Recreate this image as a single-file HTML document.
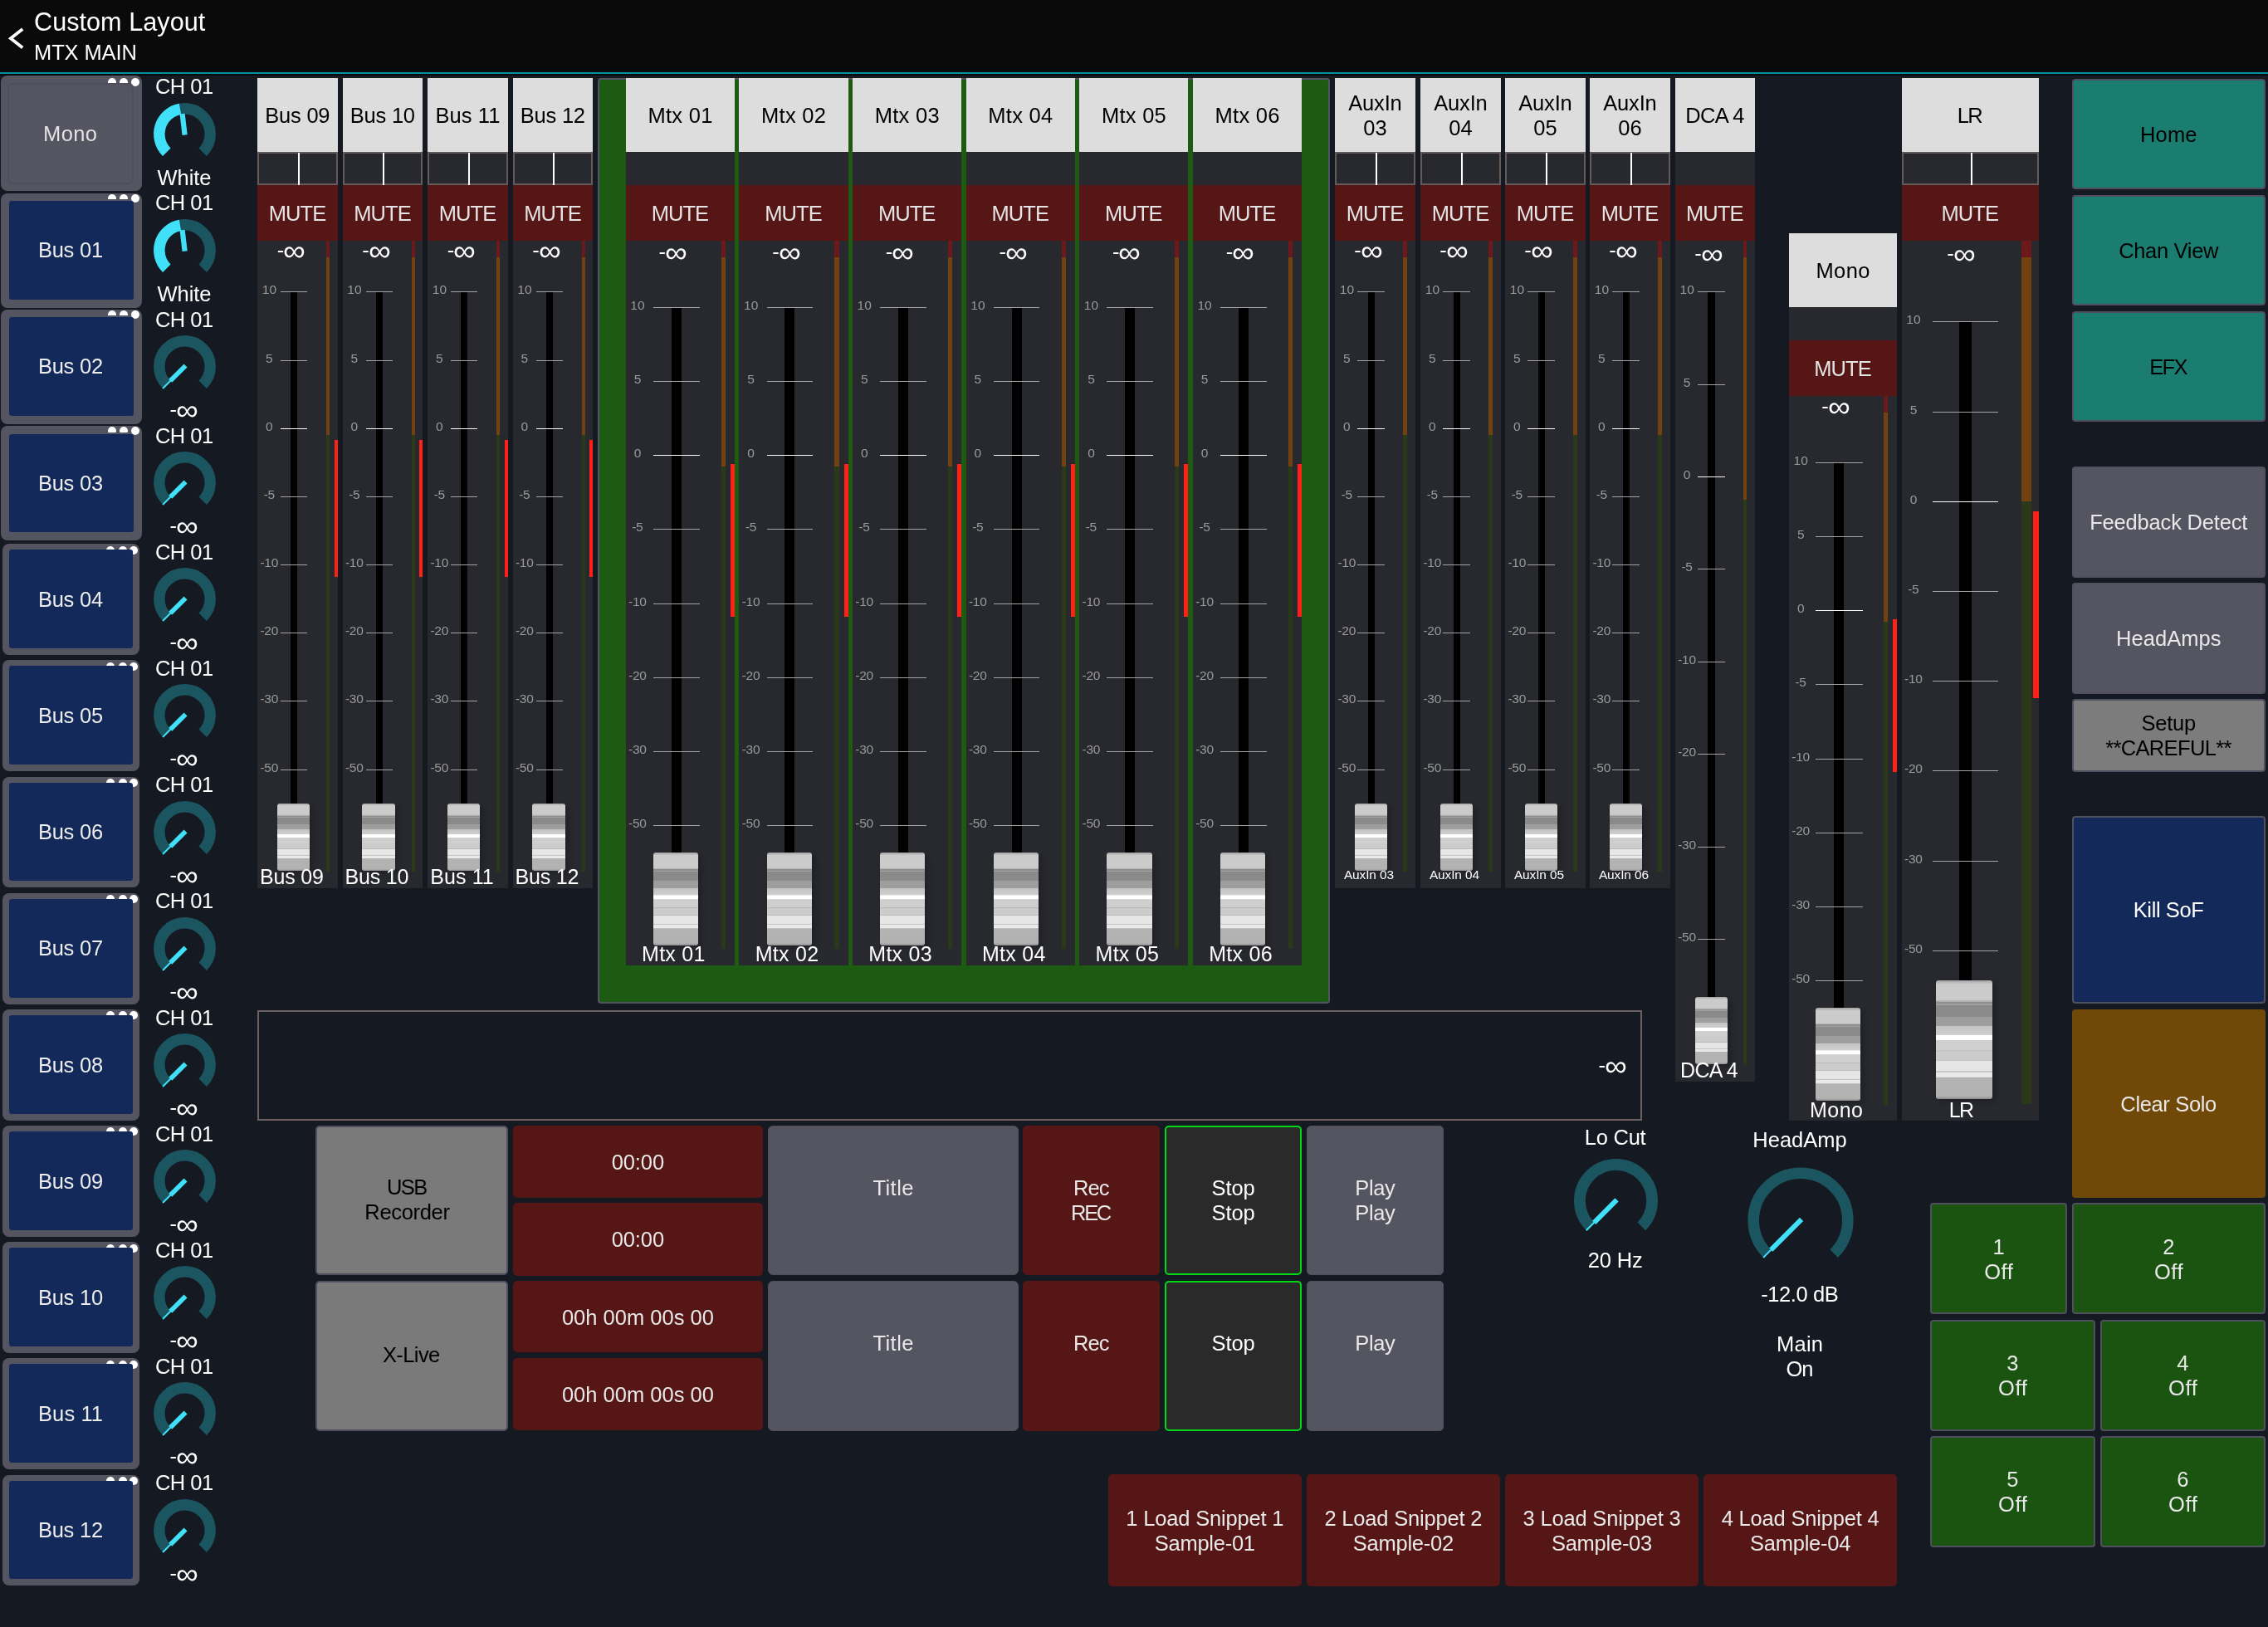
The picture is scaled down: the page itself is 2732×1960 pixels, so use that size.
<!DOCTYPE html>
<html lang="en"><head><meta charset="utf-8"><title>Custom Layout - MTX MAIN</title>
<style>
html,body{margin:0;padding:0;background:#151922;}
body{width:2732px;height:1960px;position:relative;overflow:hidden;font-family:"Liberation Sans",sans-serif;}
#w{position:absolute;left:0;top:0;width:2732px;height:1960px;will-change:transform;}
.a{position:absolute;}
.t{position:absolute;white-space:nowrap;}
.inf{display:inline-block;font-size:1.38em;line-height:0;position:relative;top:0.115em;transform:scale(1.07,1);transform-origin:0 50%;margin-right:0.04em;margin-left:-0.035em;}
</style></head>
<body>
<div id="w">
<div class="a" style="left:0px;top:0px;width:2732px;height:91px;background:#0a0a0a;"></div>
<div class="a" style="left:0px;top:87px;width:2732px;height:2px;background:#0391a6;"></div>
<svg class="a" style="left:8px;top:32px" width="24" height="28" viewBox="0 0 24 28"><path d="M19.2 3 L4.9 14.3 L19.2 25.5" fill="none" stroke="#fff" stroke-width="3.8"/></svg>
<div class="t" style="left:41px;top:7.6px;width:600px;font-size:30.6px;line-height:36px;color:#fff;text-align:left;letter-spacing:0.04px;">Custom Layout</div>
<div class="t" style="left:41px;top:48.16px;width:600px;font-size:25.5px;line-height:30px;color:#fff;text-align:left;letter-spacing:-0.11px;">MTX MAIN</div>
<div class="a" style="left:1.2px;top:90.6px;width:169.4px;height:139.6px;background:#555562;border-radius:8px;"></div>
<div class="a" style="left:130px;top:93.8px;width:10px;height:6.3px;overflow:hidden;"><div style="width:10px;height:10px;border-radius:50%;background:#fff"></div></div>
<div class="a" style="left:143.8px;top:93.8px;width:10px;height:6.3px;overflow:hidden;"><div style="width:10px;height:10px;border-radius:50%;background:#fff"></div></div>
<div class="a" style="left:158px;top:93.8px;width:10px;height:10px;background:#fff;border-radius:50%;"></div>
<div class="a" style="left:9.3px;top:100.4px;width:152.2px;height:122px;background:#555562;border:2px solid #4f4f5c;border-radius:6px;box-sizing:border-box;"></div>
<div class="t" style="left:-215.3px;top:146.06px;width:600px;font-size:25.5px;line-height:30px;color:#e2e2e2;text-align:center;letter-spacing:0.41px;">Mono</div>
<div class="t" style="left:-78.26px;top:89.16px;width:600px;font-size:25.5px;line-height:30px;color:#fff;text-align:center;letter-spacing:-0.51px;">CH 01</div>
<svg class="a" style="left:181.8px;top:120.5px" width="81" height="81" viewBox="0 0 81 81"><path d="M18.79 62.21 A30.70 30.70 0 1 1 62.21 62.21" fill="none" stroke="#1b5560" stroke-width="13.40"/><path d="M18.79 62.21 A30.70 30.70 0 0 1 35.02 10.29" fill="none" stroke="#3fe0f8" stroke-width="13.40"/><line x1="40.64" y1="41.69" x2="37.60" y2="16.17" stroke="#3fe0f8" stroke-width="6.2"/></svg>
<div class="t" style="left:-78.05px;top:199.16px;width:600px;font-size:25.5px;line-height:30px;color:#fff;text-align:center;letter-spacing:-0.10px;">White</div>
<div class="a" style="left:1.2px;top:232.58px;width:169.4px;height:138.4px;background:#555562;border-radius:8px;"></div>
<div class="a" style="left:130px;top:233.98px;width:10px;height:6.3px;overflow:hidden;"><div style="width:10px;height:10px;border-radius:50%;background:#fff"></div></div>
<div class="a" style="left:143.8px;top:233.98px;width:10px;height:6.3px;overflow:hidden;"><div style="width:10px;height:10px;border-radius:50%;background:#fff"></div></div>
<div class="a" style="left:158px;top:233.98px;width:10px;height:10px;background:#fff;border-radius:50%;"></div>
<div class="a" style="left:11px;top:242.18px;width:149.5px;height:118.5px;background:#122959;border-radius:3px;"></div>
<div class="t" style="left:-215.11px;top:286.24px;width:600px;font-size:25.5px;line-height:30px;color:#ececec;text-align:center;letter-spacing:-0.23px;">Bus 01</div>
<div class="t" style="left:-78.26px;top:229.34px;width:600px;font-size:25.5px;line-height:30px;color:#fff;text-align:center;letter-spacing:-0.51px;">CH 01</div>
<svg class="a" style="left:181.8px;top:260.68px" width="81" height="81" viewBox="0 0 81 81"><path d="M18.79 62.21 A30.70 30.70 0 1 1 62.21 62.21" fill="none" stroke="#1b5560" stroke-width="13.40"/><path d="M18.79 62.21 A30.70 30.70 0 0 1 35.02 10.29" fill="none" stroke="#3fe0f8" stroke-width="13.40"/><line x1="40.64" y1="41.69" x2="37.60" y2="16.17" stroke="#3fe0f8" stroke-width="6.2"/></svg>
<div class="t" style="left:-78.05px;top:339.34px;width:600px;font-size:25.5px;line-height:30px;color:#fff;text-align:center;letter-spacing:-0.10px;">White</div>
<div class="a" style="left:1.2px;top:372.76px;width:169.4px;height:138.4px;background:#555562;border-radius:8px;"></div>
<div class="a" style="left:130px;top:374.16px;width:10px;height:6.3px;overflow:hidden;"><div style="width:10px;height:10px;border-radius:50%;background:#fff"></div></div>
<div class="a" style="left:143.8px;top:374.16px;width:10px;height:6.3px;overflow:hidden;"><div style="width:10px;height:10px;border-radius:50%;background:#fff"></div></div>
<div class="a" style="left:158px;top:374.16px;width:10px;height:10px;background:#fff;border-radius:50%;"></div>
<div class="a" style="left:11px;top:382.36px;width:149.5px;height:118.5px;background:#122959;border-radius:3px;"></div>
<div class="t" style="left:-215.11px;top:426.42px;width:600px;font-size:25.5px;line-height:30px;color:#ececec;text-align:center;letter-spacing:-0.23px;">Bus 02</div>
<div class="t" style="left:-78.26px;top:369.52px;width:600px;font-size:25.5px;line-height:30px;color:#fff;text-align:center;letter-spacing:-0.51px;">CH 01</div>
<svg class="a" style="left:181.8px;top:400.86px" width="81" height="81" viewBox="0 0 81 81"><path d="M18.79 62.21 A30.70 30.70 0 1 1 62.21 62.21" fill="none" stroke="#1b5560" stroke-width="13.40"/><line x1="41.56" y1="39.44" x2="23.18" y2="57.82" stroke="#3fe0f8" stroke-width="5.6"/><line x1="23.53" y1="57.47" x2="14.05" y2="66.95" stroke="#3fe0f8" stroke-width="2"/></svg>
<div class="t" style="left:-78.5px;top:477.82px;width:600px;font-size:25.5px;line-height:30px;color:#fff;text-align:center;">-<span class="inf">∞</span></div>
<div class="a" style="left:1.2px;top:512.94px;width:169.4px;height:138.4px;background:#555562;border-radius:8px;"></div>
<div class="a" style="left:130px;top:514.34px;width:10px;height:6.3px;overflow:hidden;"><div style="width:10px;height:10px;border-radius:50%;background:#fff"></div></div>
<div class="a" style="left:143.8px;top:514.34px;width:10px;height:6.3px;overflow:hidden;"><div style="width:10px;height:10px;border-radius:50%;background:#fff"></div></div>
<div class="a" style="left:158px;top:514.34px;width:10px;height:10px;background:#fff;border-radius:50%;"></div>
<div class="a" style="left:11px;top:522.54px;width:149.5px;height:118.5px;background:#122959;border-radius:3px;"></div>
<div class="t" style="left:-215.11px;top:566.6px;width:600px;font-size:25.5px;line-height:30px;color:#ececec;text-align:center;letter-spacing:-0.23px;">Bus 03</div>
<div class="t" style="left:-78.26px;top:509.7px;width:600px;font-size:25.5px;line-height:30px;color:#fff;text-align:center;letter-spacing:-0.51px;">CH 01</div>
<svg class="a" style="left:181.8px;top:541.04px" width="81" height="81" viewBox="0 0 81 81"><path d="M18.79 62.21 A30.70 30.70 0 1 1 62.21 62.21" fill="none" stroke="#1b5560" stroke-width="13.40"/><line x1="41.56" y1="39.44" x2="23.18" y2="57.82" stroke="#3fe0f8" stroke-width="5.6"/><line x1="23.53" y1="57.47" x2="14.05" y2="66.95" stroke="#3fe0f8" stroke-width="2"/></svg>
<div class="t" style="left:-78.5px;top:618px;width:600px;font-size:25.5px;line-height:30px;color:#fff;text-align:center;">-<span class="inf">∞</span></div>
<div class="a" style="left:3px;top:655.22px;width:165px;height:133.75px;background:#555562;border-radius:8px;"></div>
<div class="a" style="left:127.5px;top:657.52px;width:10px;height:10px;background:#fff;border-radius:50%;"></div>
<div class="a" style="left:142.5px;top:657.52px;width:10px;height:10px;background:#fff;border-radius:50%;"></div>
<div class="a" style="left:156px;top:657.52px;width:10px;height:10px;background:#fff;border-radius:50%;"></div>
<div class="a" style="left:11.25px;top:662.22px;width:148.75px;height:118.75px;background:#122959;border-radius:3px;"></div>
<div class="t" style="left:-215.11px;top:706.78px;width:600px;font-size:25.5px;line-height:30px;color:#ececec;text-align:center;letter-spacing:-0.23px;">Bus 04</div>
<div class="t" style="left:-78.26px;top:649.88px;width:600px;font-size:25.5px;line-height:30px;color:#fff;text-align:center;letter-spacing:-0.51px;">CH 01</div>
<svg class="a" style="left:181.8px;top:681.22px" width="81" height="81" viewBox="0 0 81 81"><path d="M18.79 62.21 A30.70 30.70 0 1 1 62.21 62.21" fill="none" stroke="#1b5560" stroke-width="13.40"/><line x1="41.56" y1="39.44" x2="23.18" y2="57.82" stroke="#3fe0f8" stroke-width="5.6"/><line x1="23.53" y1="57.47" x2="14.05" y2="66.95" stroke="#3fe0f8" stroke-width="2"/></svg>
<div class="t" style="left:-78.5px;top:758.18px;width:600px;font-size:25.5px;line-height:30px;color:#fff;text-align:center;">-<span class="inf">∞</span></div>
<div class="a" style="left:3px;top:795.4px;width:165px;height:133.75px;background:#555562;border-radius:8px;"></div>
<div class="a" style="left:127.5px;top:797.7px;width:10px;height:10px;background:#fff;border-radius:50%;"></div>
<div class="a" style="left:142.5px;top:797.7px;width:10px;height:10px;background:#fff;border-radius:50%;"></div>
<div class="a" style="left:156px;top:797.7px;width:10px;height:10px;background:#fff;border-radius:50%;"></div>
<div class="a" style="left:11.25px;top:802.4px;width:148.75px;height:118.75px;background:#122959;border-radius:3px;"></div>
<div class="t" style="left:-215.11px;top:846.96px;width:600px;font-size:25.5px;line-height:30px;color:#ececec;text-align:center;letter-spacing:-0.23px;">Bus 05</div>
<div class="t" style="left:-78.26px;top:790.06px;width:600px;font-size:25.5px;line-height:30px;color:#fff;text-align:center;letter-spacing:-0.51px;">CH 01</div>
<svg class="a" style="left:181.8px;top:821.4px" width="81" height="81" viewBox="0 0 81 81"><path d="M18.79 62.21 A30.70 30.70 0 1 1 62.21 62.21" fill="none" stroke="#1b5560" stroke-width="13.40"/><line x1="41.56" y1="39.44" x2="23.18" y2="57.82" stroke="#3fe0f8" stroke-width="5.6"/><line x1="23.53" y1="57.47" x2="14.05" y2="66.95" stroke="#3fe0f8" stroke-width="2"/></svg>
<div class="t" style="left:-78.5px;top:898.36px;width:600px;font-size:25.5px;line-height:30px;color:#fff;text-align:center;">-<span class="inf">∞</span></div>
<div class="a" style="left:3px;top:935.58px;width:165px;height:133.75px;background:#555562;border-radius:8px;"></div>
<div class="a" style="left:127.5px;top:937.88px;width:10px;height:10px;background:#fff;border-radius:50%;"></div>
<div class="a" style="left:142.5px;top:937.88px;width:10px;height:10px;background:#fff;border-radius:50%;"></div>
<div class="a" style="left:156px;top:937.88px;width:10px;height:10px;background:#fff;border-radius:50%;"></div>
<div class="a" style="left:11.25px;top:942.58px;width:148.75px;height:118.75px;background:#122959;border-radius:3px;"></div>
<div class="t" style="left:-215.11px;top:987.14px;width:600px;font-size:25.5px;line-height:30px;color:#ececec;text-align:center;letter-spacing:-0.23px;">Bus 06</div>
<div class="t" style="left:-78.26px;top:930.24px;width:600px;font-size:25.5px;line-height:30px;color:#fff;text-align:center;letter-spacing:-0.51px;">CH 01</div>
<svg class="a" style="left:181.8px;top:961.58px" width="81" height="81" viewBox="0 0 81 81"><path d="M18.79 62.21 A30.70 30.70 0 1 1 62.21 62.21" fill="none" stroke="#1b5560" stroke-width="13.40"/><line x1="41.56" y1="39.44" x2="23.18" y2="57.82" stroke="#3fe0f8" stroke-width="5.6"/><line x1="23.53" y1="57.47" x2="14.05" y2="66.95" stroke="#3fe0f8" stroke-width="2"/></svg>
<div class="t" style="left:-78.5px;top:1038.54px;width:600px;font-size:25.5px;line-height:30px;color:#fff;text-align:center;">-<span class="inf">∞</span></div>
<div class="a" style="left:3px;top:1075.76px;width:165px;height:133.75px;background:#555562;border-radius:8px;"></div>
<div class="a" style="left:127.5px;top:1078.06px;width:10px;height:10px;background:#fff;border-radius:50%;"></div>
<div class="a" style="left:142.5px;top:1078.06px;width:10px;height:10px;background:#fff;border-radius:50%;"></div>
<div class="a" style="left:156px;top:1078.06px;width:10px;height:10px;background:#fff;border-radius:50%;"></div>
<div class="a" style="left:11.25px;top:1082.76px;width:148.75px;height:118.75px;background:#122959;border-radius:3px;"></div>
<div class="t" style="left:-215.11px;top:1127.32px;width:600px;font-size:25.5px;line-height:30px;color:#ececec;text-align:center;letter-spacing:-0.23px;">Bus 07</div>
<div class="t" style="left:-78.26px;top:1070.42px;width:600px;font-size:25.5px;line-height:30px;color:#fff;text-align:center;letter-spacing:-0.51px;">CH 01</div>
<svg class="a" style="left:181.8px;top:1101.76px" width="81" height="81" viewBox="0 0 81 81"><path d="M18.79 62.21 A30.70 30.70 0 1 1 62.21 62.21" fill="none" stroke="#1b5560" stroke-width="13.40"/><line x1="41.56" y1="39.44" x2="23.18" y2="57.82" stroke="#3fe0f8" stroke-width="5.6"/><line x1="23.53" y1="57.47" x2="14.05" y2="66.95" stroke="#3fe0f8" stroke-width="2"/></svg>
<div class="t" style="left:-78.5px;top:1178.72px;width:600px;font-size:25.5px;line-height:30px;color:#fff;text-align:center;">-<span class="inf">∞</span></div>
<div class="a" style="left:3px;top:1215.94px;width:165px;height:133.75px;background:#555562;border-radius:8px;"></div>
<div class="a" style="left:127.5px;top:1218.24px;width:10px;height:10px;background:#fff;border-radius:50%;"></div>
<div class="a" style="left:142.5px;top:1218.24px;width:10px;height:10px;background:#fff;border-radius:50%;"></div>
<div class="a" style="left:156px;top:1218.24px;width:10px;height:10px;background:#fff;border-radius:50%;"></div>
<div class="a" style="left:11.25px;top:1222.94px;width:148.75px;height:118.75px;background:#122959;border-radius:3px;"></div>
<div class="t" style="left:-215.11px;top:1267.5px;width:600px;font-size:25.5px;line-height:30px;color:#ececec;text-align:center;letter-spacing:-0.23px;">Bus 08</div>
<div class="t" style="left:-78.26px;top:1210.6px;width:600px;font-size:25.5px;line-height:30px;color:#fff;text-align:center;letter-spacing:-0.51px;">CH 01</div>
<svg class="a" style="left:181.8px;top:1241.94px" width="81" height="81" viewBox="0 0 81 81"><path d="M18.79 62.21 A30.70 30.70 0 1 1 62.21 62.21" fill="none" stroke="#1b5560" stroke-width="13.40"/><line x1="41.56" y1="39.44" x2="23.18" y2="57.82" stroke="#3fe0f8" stroke-width="5.6"/><line x1="23.53" y1="57.47" x2="14.05" y2="66.95" stroke="#3fe0f8" stroke-width="2"/></svg>
<div class="t" style="left:-78.5px;top:1318.9px;width:600px;font-size:25.5px;line-height:30px;color:#fff;text-align:center;">-<span class="inf">∞</span></div>
<div class="a" style="left:3px;top:1356.12px;width:165px;height:133.75px;background:#555562;border-radius:8px;"></div>
<div class="a" style="left:127.5px;top:1358.42px;width:10px;height:10px;background:#fff;border-radius:50%;"></div>
<div class="a" style="left:142.5px;top:1358.42px;width:10px;height:10px;background:#fff;border-radius:50%;"></div>
<div class="a" style="left:156px;top:1358.42px;width:10px;height:10px;background:#fff;border-radius:50%;"></div>
<div class="a" style="left:11.25px;top:1363.12px;width:148.75px;height:118.75px;background:#122959;border-radius:3px;"></div>
<div class="t" style="left:-215.11px;top:1407.68px;width:600px;font-size:25.5px;line-height:30px;color:#ececec;text-align:center;letter-spacing:-0.23px;">Bus 09</div>
<div class="t" style="left:-78.26px;top:1350.78px;width:600px;font-size:25.5px;line-height:30px;color:#fff;text-align:center;letter-spacing:-0.51px;">CH 01</div>
<svg class="a" style="left:181.8px;top:1382.12px" width="81" height="81" viewBox="0 0 81 81"><path d="M18.79 62.21 A30.70 30.70 0 1 1 62.21 62.21" fill="none" stroke="#1b5560" stroke-width="13.40"/><line x1="41.56" y1="39.44" x2="23.18" y2="57.82" stroke="#3fe0f8" stroke-width="5.6"/><line x1="23.53" y1="57.47" x2="14.05" y2="66.95" stroke="#3fe0f8" stroke-width="2"/></svg>
<div class="t" style="left:-78.5px;top:1459.08px;width:600px;font-size:25.5px;line-height:30px;color:#fff;text-align:center;">-<span class="inf">∞</span></div>
<div class="a" style="left:3px;top:1496.3px;width:165px;height:133.75px;background:#555562;border-radius:8px;"></div>
<div class="a" style="left:127.5px;top:1498.6px;width:10px;height:10px;background:#fff;border-radius:50%;"></div>
<div class="a" style="left:142.5px;top:1498.6px;width:10px;height:10px;background:#fff;border-radius:50%;"></div>
<div class="a" style="left:156px;top:1498.6px;width:10px;height:10px;background:#fff;border-radius:50%;"></div>
<div class="a" style="left:11.25px;top:1503.3px;width:148.75px;height:118.75px;background:#122959;border-radius:3px;"></div>
<div class="t" style="left:-215.11px;top:1547.86px;width:600px;font-size:25.5px;line-height:30px;color:#ececec;text-align:center;letter-spacing:-0.23px;">Bus 10</div>
<div class="t" style="left:-78.26px;top:1490.96px;width:600px;font-size:25.5px;line-height:30px;color:#fff;text-align:center;letter-spacing:-0.51px;">CH 01</div>
<svg class="a" style="left:181.8px;top:1522.3px" width="81" height="81" viewBox="0 0 81 81"><path d="M18.79 62.21 A30.70 30.70 0 1 1 62.21 62.21" fill="none" stroke="#1b5560" stroke-width="13.40"/><line x1="41.56" y1="39.44" x2="23.18" y2="57.82" stroke="#3fe0f8" stroke-width="5.6"/><line x1="23.53" y1="57.47" x2="14.05" y2="66.95" stroke="#3fe0f8" stroke-width="2"/></svg>
<div class="t" style="left:-78.5px;top:1599.26px;width:600px;font-size:25.5px;line-height:30px;color:#fff;text-align:center;">-<span class="inf">∞</span></div>
<div class="a" style="left:3px;top:1636.48px;width:165px;height:133.75px;background:#555562;border-radius:8px;"></div>
<div class="a" style="left:127.5px;top:1638.78px;width:10px;height:10px;background:#fff;border-radius:50%;"></div>
<div class="a" style="left:142.5px;top:1638.78px;width:10px;height:10px;background:#fff;border-radius:50%;"></div>
<div class="a" style="left:156px;top:1638.78px;width:10px;height:10px;background:#fff;border-radius:50%;"></div>
<div class="a" style="left:11.25px;top:1643.48px;width:148.75px;height:118.75px;background:#122959;border-radius:3px;"></div>
<div class="t" style="left:-214.96px;top:1688.04px;width:600px;font-size:25.5px;line-height:30px;color:#ececec;text-align:center;letter-spacing:0.09px;">Bus 11</div>
<div class="t" style="left:-78.26px;top:1631.14px;width:600px;font-size:25.5px;line-height:30px;color:#fff;text-align:center;letter-spacing:-0.51px;">CH 01</div>
<svg class="a" style="left:181.8px;top:1662.48px" width="81" height="81" viewBox="0 0 81 81"><path d="M18.79 62.21 A30.70 30.70 0 1 1 62.21 62.21" fill="none" stroke="#1b5560" stroke-width="13.40"/><line x1="41.56" y1="39.44" x2="23.18" y2="57.82" stroke="#3fe0f8" stroke-width="5.6"/><line x1="23.53" y1="57.47" x2="14.05" y2="66.95" stroke="#3fe0f8" stroke-width="2"/></svg>
<div class="t" style="left:-78.5px;top:1739.44px;width:600px;font-size:25.5px;line-height:30px;color:#fff;text-align:center;">-<span class="inf">∞</span></div>
<div class="a" style="left:3px;top:1776.66px;width:165px;height:133.75px;background:#555562;border-radius:8px;"></div>
<div class="a" style="left:127.5px;top:1778.96px;width:10px;height:10px;background:#fff;border-radius:50%;"></div>
<div class="a" style="left:142.5px;top:1778.96px;width:10px;height:10px;background:#fff;border-radius:50%;"></div>
<div class="a" style="left:156px;top:1778.96px;width:10px;height:10px;background:#fff;border-radius:50%;"></div>
<div class="a" style="left:11.25px;top:1783.66px;width:148.75px;height:118.75px;background:#122959;border-radius:3px;"></div>
<div class="t" style="left:-215.11px;top:1828.22px;width:600px;font-size:25.5px;line-height:30px;color:#ececec;text-align:center;letter-spacing:-0.23px;">Bus 12</div>
<div class="t" style="left:-78.26px;top:1771.32px;width:600px;font-size:25.5px;line-height:30px;color:#fff;text-align:center;letter-spacing:-0.51px;">CH 01</div>
<svg class="a" style="left:181.8px;top:1802.66px" width="81" height="81" viewBox="0 0 81 81"><path d="M18.79 62.21 A30.70 30.70 0 1 1 62.21 62.21" fill="none" stroke="#1b5560" stroke-width="13.40"/><line x1="41.56" y1="39.44" x2="23.18" y2="57.82" stroke="#3fe0f8" stroke-width="5.6"/><line x1="23.53" y1="57.47" x2="14.05" y2="66.95" stroke="#3fe0f8" stroke-width="2"/></svg>
<div class="t" style="left:-78.5px;top:1879.62px;width:600px;font-size:25.5px;line-height:30px;color:#fff;text-align:center;">-<span class="inf">∞</span></div>
<div class="a" style="left:310px;top:94px;width:96.9px;height:88.5px;background:#dddddd;"></div>
<div class="t" style="left:58.34px;top:124.31px;width:600px;font-size:25.5px;line-height:30px;color:#000;text-align:center;letter-spacing:-0.23px;">Bus 09</div>
<div class="a" style="left:310px;top:182.5px;width:96.9px;height:887px;background:#27292f;"></div>
<div class="a" style="left:310px;top:183.4px;width:96.9px;height:39.8px;border:2px solid #655a5a;box-sizing:border-box;"></div>
<div class="a" style="left:358.75px;top:184px;width:2.2px;height:39px;background:#fff;"></div>
<div class="a" style="left:310px;top:223px;width:96.9px;height:66.5px;background:#561616;"></div>
<div class="t" style="left:57.98px;top:242.31px;width:600px;font-size:25.5px;line-height:30px;color:#e4e4e4;text-align:center;letter-spacing:-0.93px;">MUTE</div>
<div class="t" style="left:50.75px;top:286.06px;width:600px;font-size:25.5px;line-height:30px;color:#fff;text-align:center;">-<span class="inf">∞</span></div>
<div class="a" style="left:350px;top:351px;width:8px;height:619px;background:#000;"></div>
<div class="a" style="left:338px;top:351px;width:32px;height:1px;background:#a4a4a4;"></div>
<div class="t" style="left:284.44px;top:340.33px;width:80px;font-size:15.5px;line-height:18px;color:#9a9a9a;text-align:center;letter-spacing:0.08px;">10</div>
<div class="a" style="left:338px;top:434px;width:32px;height:1px;background:#a4a4a4;"></div>
<div class="t" style="left:284.44px;top:423.33px;width:80px;font-size:15.5px;line-height:18px;color:#9a9a9a;text-align:center;letter-spacing:0.08px;">5</div>
<div class="a" style="left:338px;top:516px;width:32px;height:1px;background:#ffffff;"></div>
<div class="t" style="left:284.44px;top:505.33px;width:80px;font-size:15.5px;line-height:18px;color:#9a9a9a;text-align:center;letter-spacing:0.08px;">0</div>
<div class="a" style="left:338px;top:598px;width:32px;height:1px;background:#a4a4a4;"></div>
<div class="t" style="left:284.2px;top:587.33px;width:80px;font-size:15.5px;line-height:18px;color:#9a9a9a;text-align:center;letter-spacing:-0.40px;">-5</div>
<div class="a" style="left:338px;top:680px;width:32px;height:1px;background:#a4a4a4;"></div>
<div class="t" style="left:284.28px;top:669.33px;width:80px;font-size:15.5px;line-height:18px;color:#9a9a9a;text-align:center;letter-spacing:-0.24px;">-10</div>
<div class="a" style="left:338px;top:762px;width:32px;height:1px;background:#a4a4a4;"></div>
<div class="t" style="left:284.28px;top:751.33px;width:80px;font-size:15.5px;line-height:18px;color:#9a9a9a;text-align:center;letter-spacing:-0.24px;">-20</div>
<div class="a" style="left:338px;top:844px;width:32px;height:1px;background:#a4a4a4;"></div>
<div class="t" style="left:284.28px;top:833.33px;width:80px;font-size:15.5px;line-height:18px;color:#9a9a9a;text-align:center;letter-spacing:-0.24px;">-30</div>
<div class="a" style="left:338px;top:927px;width:32px;height:1px;background:#a4a4a4;"></div>
<div class="t" style="left:284.28px;top:916.33px;width:80px;font-size:15.5px;line-height:18px;color:#9a9a9a;text-align:center;letter-spacing:-0.24px;">-50</div>
<div class="a" style="left:393px;top:289.5px;width:4px;height:20.3px;background:#6d191c;"></div>
<div class="a" style="left:393px;top:309.8px;width:4px;height:213.95px;background:#71410f;"></div>
<div class="a" style="left:393px;top:523.75px;width:4px;height:525.75px;background:#2a3a18;"></div>
<div class="a" style="left:402.9px;top:529.5px;width:4px;height:165px;background:#ff2116;"></div>
<div class="a" style="left:333.75px;top:968px;width:39.25px;height:80.75px;background:linear-gradient(to bottom,#a2a2a2 0,#cbcbcb 3.2%,#cbcbcb 16.6%,#b4b4b4 16.8%,#b0b0b0 18%,#8e8e8e 18.3%,#8e8e8e 19.6%,#a0a0a0 19.9%,#a0a0a0 20.6%,#8a8a8a 21%,#8a8a8a 30.4%,#9e9e9e 30.8%,#9e9e9e 38.3%,#c4c4c4 38.7%,#cfcfcf 45.8%,#ffffff 46.1%,#ffffff 50.2%,#cfcfcf 50.5%,#cfcfcf 59%,#b9b9b9 59.2%,#b9b9b9 59.6%,#cccccc 59.9%,#cccccc 66.8%,#bbbbbb 67%,#bbbbbb 67.4%,#e6e6e6 67.8%,#e6e6e6 76.3%,#c6c6c6 76.6%,#c6c6c6 77.3%,#e9e9e9 77.7%,#e9e9e9 81.4%,#b3b3b3 81.8%,#b2b2b2 97.5%,#8c8c8c 100%);border-radius:3px;box-shadow:4px 3px 6px rgba(0,0,0,0.22);"></div>
<div class="t" style="left:51.39px;top:1041.34px;width:600px;font-size:25px;line-height:30px;color:#fff;text-align:center;letter-spacing:-0.22px;">Bus 09</div>
<div class="a" style="left:412.5px;top:94px;width:96.9px;height:88.5px;background:#dddddd;"></div>
<div class="t" style="left:160.84px;top:124.31px;width:600px;font-size:25.5px;line-height:30px;color:#000;text-align:center;letter-spacing:-0.23px;">Bus 10</div>
<div class="a" style="left:412.5px;top:182.5px;width:96.9px;height:887px;background:#27292f;"></div>
<div class="a" style="left:412.5px;top:183.4px;width:96.9px;height:39.8px;border:2px solid #655a5a;box-sizing:border-box;"></div>
<div class="a" style="left:461.25px;top:184px;width:2.2px;height:39px;background:#fff;"></div>
<div class="a" style="left:412.5px;top:223px;width:96.9px;height:66.5px;background:#561616;"></div>
<div class="t" style="left:160.48px;top:242.31px;width:600px;font-size:25.5px;line-height:30px;color:#e4e4e4;text-align:center;letter-spacing:-0.93px;">MUTE</div>
<div class="t" style="left:153.25px;top:286.06px;width:600px;font-size:25.5px;line-height:30px;color:#fff;text-align:center;">-<span class="inf">∞</span></div>
<div class="a" style="left:452.5px;top:351px;width:8px;height:619px;background:#000;"></div>
<div class="a" style="left:440.5px;top:351px;width:32px;height:1px;background:#a4a4a4;"></div>
<div class="t" style="left:386.94px;top:340.33px;width:80px;font-size:15.5px;line-height:18px;color:#9a9a9a;text-align:center;letter-spacing:0.08px;">10</div>
<div class="a" style="left:440.5px;top:434px;width:32px;height:1px;background:#a4a4a4;"></div>
<div class="t" style="left:386.94px;top:423.33px;width:80px;font-size:15.5px;line-height:18px;color:#9a9a9a;text-align:center;letter-spacing:0.08px;">5</div>
<div class="a" style="left:440.5px;top:516px;width:32px;height:1px;background:#ffffff;"></div>
<div class="t" style="left:386.94px;top:505.33px;width:80px;font-size:15.5px;line-height:18px;color:#9a9a9a;text-align:center;letter-spacing:0.08px;">0</div>
<div class="a" style="left:440.5px;top:598px;width:32px;height:1px;background:#a4a4a4;"></div>
<div class="t" style="left:386.7px;top:587.33px;width:80px;font-size:15.5px;line-height:18px;color:#9a9a9a;text-align:center;letter-spacing:-0.40px;">-5</div>
<div class="a" style="left:440.5px;top:680px;width:32px;height:1px;background:#a4a4a4;"></div>
<div class="t" style="left:386.78px;top:669.33px;width:80px;font-size:15.5px;line-height:18px;color:#9a9a9a;text-align:center;letter-spacing:-0.24px;">-10</div>
<div class="a" style="left:440.5px;top:762px;width:32px;height:1px;background:#a4a4a4;"></div>
<div class="t" style="left:386.78px;top:751.33px;width:80px;font-size:15.5px;line-height:18px;color:#9a9a9a;text-align:center;letter-spacing:-0.24px;">-20</div>
<div class="a" style="left:440.5px;top:844px;width:32px;height:1px;background:#a4a4a4;"></div>
<div class="t" style="left:386.78px;top:833.33px;width:80px;font-size:15.5px;line-height:18px;color:#9a9a9a;text-align:center;letter-spacing:-0.24px;">-30</div>
<div class="a" style="left:440.5px;top:927px;width:32px;height:1px;background:#a4a4a4;"></div>
<div class="t" style="left:386.78px;top:916.33px;width:80px;font-size:15.5px;line-height:18px;color:#9a9a9a;text-align:center;letter-spacing:-0.24px;">-50</div>
<div class="a" style="left:495.5px;top:289.5px;width:4px;height:20.3px;background:#6d191c;"></div>
<div class="a" style="left:495.5px;top:309.8px;width:4px;height:213.95px;background:#71410f;"></div>
<div class="a" style="left:495.5px;top:523.75px;width:4px;height:525.75px;background:#2a3a18;"></div>
<div class="a" style="left:505.4px;top:529.5px;width:4px;height:165px;background:#ff2116;"></div>
<div class="a" style="left:436.25px;top:968px;width:39.25px;height:80.75px;background:linear-gradient(to bottom,#a2a2a2 0,#cbcbcb 3.2%,#cbcbcb 16.6%,#b4b4b4 16.8%,#b0b0b0 18%,#8e8e8e 18.3%,#8e8e8e 19.6%,#a0a0a0 19.9%,#a0a0a0 20.6%,#8a8a8a 21%,#8a8a8a 30.4%,#9e9e9e 30.8%,#9e9e9e 38.3%,#c4c4c4 38.7%,#cfcfcf 45.8%,#ffffff 46.1%,#ffffff 50.2%,#cfcfcf 50.5%,#cfcfcf 59%,#b9b9b9 59.2%,#b9b9b9 59.6%,#cccccc 59.9%,#cccccc 66.8%,#bbbbbb 67%,#bbbbbb 67.4%,#e6e6e6 67.8%,#e6e6e6 76.3%,#c6c6c6 76.6%,#c6c6c6 77.3%,#e9e9e9 77.7%,#e9e9e9 81.4%,#b3b3b3 81.8%,#b2b2b2 97.5%,#8c8c8c 100%);border-radius:3px;box-shadow:4px 3px 6px rgba(0,0,0,0.22);"></div>
<div class="t" style="left:153.89px;top:1041.34px;width:600px;font-size:25px;line-height:30px;color:#fff;text-align:center;letter-spacing:-0.22px;">Bus 10</div>
<div class="a" style="left:515px;top:94px;width:96.9px;height:88.5px;background:#dddddd;"></div>
<div class="t" style="left:263.49px;top:124.31px;width:600px;font-size:25.5px;line-height:30px;color:#000;text-align:center;letter-spacing:0.09px;">Bus 11</div>
<div class="a" style="left:515px;top:182.5px;width:96.9px;height:887px;background:#27292f;"></div>
<div class="a" style="left:515px;top:183.4px;width:96.9px;height:39.8px;border:2px solid #655a5a;box-sizing:border-box;"></div>
<div class="a" style="left:563.75px;top:184px;width:2.2px;height:39px;background:#fff;"></div>
<div class="a" style="left:515px;top:223px;width:96.9px;height:66.5px;background:#561616;"></div>
<div class="t" style="left:262.98px;top:242.31px;width:600px;font-size:25.5px;line-height:30px;color:#e4e4e4;text-align:center;letter-spacing:-0.93px;">MUTE</div>
<div class="t" style="left:255.75px;top:286.06px;width:600px;font-size:25.5px;line-height:30px;color:#fff;text-align:center;">-<span class="inf">∞</span></div>
<div class="a" style="left:555px;top:351px;width:8px;height:619px;background:#000;"></div>
<div class="a" style="left:543px;top:351px;width:32px;height:1px;background:#a4a4a4;"></div>
<div class="t" style="left:489.44px;top:340.33px;width:80px;font-size:15.5px;line-height:18px;color:#9a9a9a;text-align:center;letter-spacing:0.08px;">10</div>
<div class="a" style="left:543px;top:434px;width:32px;height:1px;background:#a4a4a4;"></div>
<div class="t" style="left:489.44px;top:423.33px;width:80px;font-size:15.5px;line-height:18px;color:#9a9a9a;text-align:center;letter-spacing:0.08px;">5</div>
<div class="a" style="left:543px;top:516px;width:32px;height:1px;background:#ffffff;"></div>
<div class="t" style="left:489.44px;top:505.33px;width:80px;font-size:15.5px;line-height:18px;color:#9a9a9a;text-align:center;letter-spacing:0.08px;">0</div>
<div class="a" style="left:543px;top:598px;width:32px;height:1px;background:#a4a4a4;"></div>
<div class="t" style="left:489.2px;top:587.33px;width:80px;font-size:15.5px;line-height:18px;color:#9a9a9a;text-align:center;letter-spacing:-0.40px;">-5</div>
<div class="a" style="left:543px;top:680px;width:32px;height:1px;background:#a4a4a4;"></div>
<div class="t" style="left:489.28px;top:669.33px;width:80px;font-size:15.5px;line-height:18px;color:#9a9a9a;text-align:center;letter-spacing:-0.24px;">-10</div>
<div class="a" style="left:543px;top:762px;width:32px;height:1px;background:#a4a4a4;"></div>
<div class="t" style="left:489.28px;top:751.33px;width:80px;font-size:15.5px;line-height:18px;color:#9a9a9a;text-align:center;letter-spacing:-0.24px;">-20</div>
<div class="a" style="left:543px;top:844px;width:32px;height:1px;background:#a4a4a4;"></div>
<div class="t" style="left:489.28px;top:833.33px;width:80px;font-size:15.5px;line-height:18px;color:#9a9a9a;text-align:center;letter-spacing:-0.24px;">-30</div>
<div class="a" style="left:543px;top:927px;width:32px;height:1px;background:#a4a4a4;"></div>
<div class="t" style="left:489.28px;top:916.33px;width:80px;font-size:15.5px;line-height:18px;color:#9a9a9a;text-align:center;letter-spacing:-0.24px;">-50</div>
<div class="a" style="left:598px;top:289.5px;width:4px;height:20.3px;background:#6d191c;"></div>
<div class="a" style="left:598px;top:309.8px;width:4px;height:213.95px;background:#71410f;"></div>
<div class="a" style="left:598px;top:523.75px;width:4px;height:525.75px;background:#2a3a18;"></div>
<div class="a" style="left:607.9px;top:529.5px;width:4px;height:165px;background:#ff2116;"></div>
<div class="a" style="left:538.75px;top:968px;width:39.25px;height:80.75px;background:linear-gradient(to bottom,#a2a2a2 0,#cbcbcb 3.2%,#cbcbcb 16.6%,#b4b4b4 16.8%,#b0b0b0 18%,#8e8e8e 18.3%,#8e8e8e 19.6%,#a0a0a0 19.9%,#a0a0a0 20.6%,#8a8a8a 21%,#8a8a8a 30.4%,#9e9e9e 30.8%,#9e9e9e 38.3%,#c4c4c4 38.7%,#cfcfcf 45.8%,#ffffff 46.1%,#ffffff 50.2%,#cfcfcf 50.5%,#cfcfcf 59%,#b9b9b9 59.2%,#b9b9b9 59.6%,#cccccc 59.9%,#cccccc 66.8%,#bbbbbb 67%,#bbbbbb 67.4%,#e6e6e6 67.8%,#e6e6e6 76.3%,#c6c6c6 76.6%,#c6c6c6 77.3%,#e9e9e9 77.7%,#e9e9e9 81.4%,#b3b3b3 81.8%,#b2b2b2 97.5%,#8c8c8c 100%);border-radius:3px;box-shadow:4px 3px 6px rgba(0,0,0,0.22);"></div>
<div class="t" style="left:256.54px;top:1041.34px;width:600px;font-size:25px;line-height:30px;color:#fff;text-align:center;letter-spacing:0.09px;">Bus 11</div>
<div class="a" style="left:617.5px;top:94px;width:96.9px;height:88.5px;background:#dddddd;"></div>
<div class="t" style="left:365.84px;top:124.31px;width:600px;font-size:25.5px;line-height:30px;color:#000;text-align:center;letter-spacing:-0.23px;">Bus 12</div>
<div class="a" style="left:617.5px;top:182.5px;width:96.9px;height:887px;background:#27292f;"></div>
<div class="a" style="left:617.5px;top:183.4px;width:96.9px;height:39.8px;border:2px solid #655a5a;box-sizing:border-box;"></div>
<div class="a" style="left:666.25px;top:184px;width:2.2px;height:39px;background:#fff;"></div>
<div class="a" style="left:617.5px;top:223px;width:96.9px;height:66.5px;background:#561616;"></div>
<div class="t" style="left:365.48px;top:242.31px;width:600px;font-size:25.5px;line-height:30px;color:#e4e4e4;text-align:center;letter-spacing:-0.93px;">MUTE</div>
<div class="t" style="left:358.25px;top:286.06px;width:600px;font-size:25.5px;line-height:30px;color:#fff;text-align:center;">-<span class="inf">∞</span></div>
<div class="a" style="left:657.5px;top:351px;width:8px;height:619px;background:#000;"></div>
<div class="a" style="left:645.5px;top:351px;width:32px;height:1px;background:#a4a4a4;"></div>
<div class="t" style="left:591.94px;top:340.33px;width:80px;font-size:15.5px;line-height:18px;color:#9a9a9a;text-align:center;letter-spacing:0.08px;">10</div>
<div class="a" style="left:645.5px;top:434px;width:32px;height:1px;background:#a4a4a4;"></div>
<div class="t" style="left:591.94px;top:423.33px;width:80px;font-size:15.5px;line-height:18px;color:#9a9a9a;text-align:center;letter-spacing:0.08px;">5</div>
<div class="a" style="left:645.5px;top:516px;width:32px;height:1px;background:#ffffff;"></div>
<div class="t" style="left:591.94px;top:505.33px;width:80px;font-size:15.5px;line-height:18px;color:#9a9a9a;text-align:center;letter-spacing:0.08px;">0</div>
<div class="a" style="left:645.5px;top:598px;width:32px;height:1px;background:#a4a4a4;"></div>
<div class="t" style="left:591.7px;top:587.33px;width:80px;font-size:15.5px;line-height:18px;color:#9a9a9a;text-align:center;letter-spacing:-0.40px;">-5</div>
<div class="a" style="left:645.5px;top:680px;width:32px;height:1px;background:#a4a4a4;"></div>
<div class="t" style="left:591.78px;top:669.33px;width:80px;font-size:15.5px;line-height:18px;color:#9a9a9a;text-align:center;letter-spacing:-0.24px;">-10</div>
<div class="a" style="left:645.5px;top:762px;width:32px;height:1px;background:#a4a4a4;"></div>
<div class="t" style="left:591.78px;top:751.33px;width:80px;font-size:15.5px;line-height:18px;color:#9a9a9a;text-align:center;letter-spacing:-0.24px;">-20</div>
<div class="a" style="left:645.5px;top:844px;width:32px;height:1px;background:#a4a4a4;"></div>
<div class="t" style="left:591.78px;top:833.33px;width:80px;font-size:15.5px;line-height:18px;color:#9a9a9a;text-align:center;letter-spacing:-0.24px;">-30</div>
<div class="a" style="left:645.5px;top:927px;width:32px;height:1px;background:#a4a4a4;"></div>
<div class="t" style="left:591.78px;top:916.33px;width:80px;font-size:15.5px;line-height:18px;color:#9a9a9a;text-align:center;letter-spacing:-0.24px;">-50</div>
<div class="a" style="left:700.5px;top:289.5px;width:4px;height:20.3px;background:#6d191c;"></div>
<div class="a" style="left:700.5px;top:309.8px;width:4px;height:213.95px;background:#71410f;"></div>
<div class="a" style="left:700.5px;top:523.75px;width:4px;height:525.75px;background:#2a3a18;"></div>
<div class="a" style="left:710.4px;top:529.5px;width:4px;height:165px;background:#ff2116;"></div>
<div class="a" style="left:641.25px;top:968px;width:39.25px;height:80.75px;background:linear-gradient(to bottom,#a2a2a2 0,#cbcbcb 3.2%,#cbcbcb 16.6%,#b4b4b4 16.8%,#b0b0b0 18%,#8e8e8e 18.3%,#8e8e8e 19.6%,#a0a0a0 19.9%,#a0a0a0 20.6%,#8a8a8a 21%,#8a8a8a 30.4%,#9e9e9e 30.8%,#9e9e9e 38.3%,#c4c4c4 38.7%,#cfcfcf 45.8%,#ffffff 46.1%,#ffffff 50.2%,#cfcfcf 50.5%,#cfcfcf 59%,#b9b9b9 59.2%,#b9b9b9 59.6%,#cccccc 59.9%,#cccccc 66.8%,#bbbbbb 67%,#bbbbbb 67.4%,#e6e6e6 67.8%,#e6e6e6 76.3%,#c6c6c6 76.6%,#c6c6c6 77.3%,#e9e9e9 77.7%,#e9e9e9 81.4%,#b3b3b3 81.8%,#b2b2b2 97.5%,#8c8c8c 100%);border-radius:3px;box-shadow:4px 3px 6px rgba(0,0,0,0.22);"></div>
<div class="t" style="left:358.89px;top:1041.34px;width:600px;font-size:25px;line-height:30px;color:#fff;text-align:center;letter-spacing:-0.22px;">Bus 12</div>
<div class="a" style="left:720px;top:94px;width:881.5px;height:1115px;background:#1d5a12;border-radius:4px;box-sizing:border-box;border:2px solid #535366;"></div>
<div class="a" style="left:753.75px;top:94px;width:131.25px;height:88.5px;background:#dddddd;"></div>
<div class="t" style="left:519.51px;top:124.31px;width:600px;font-size:25.5px;line-height:30px;color:#000;text-align:center;letter-spacing:0.28px;">Mtx 01</div>
<div class="a" style="left:753.75px;top:182.5px;width:131.25px;height:980px;background:#27292f;"></div>
<div class="a" style="left:753.75px;top:223px;width:131.25px;height:66.5px;background:#561616;"></div>
<div class="t" style="left:518.91px;top:242.31px;width:600px;font-size:25.5px;line-height:30px;color:#e4e4e4;text-align:center;letter-spacing:-0.93px;">MUTE</div>
<div class="t" style="left:510.5px;top:287.81px;width:600px;font-size:25.5px;line-height:30px;color:#fff;text-align:center;">-<span class="inf">∞</span></div>
<div class="a" style="left:808.75px;top:370px;width:12px;height:659px;background:#000;"></div>
<div class="a" style="left:787px;top:370px;width:55.5px;height:1px;background:#a4a4a4;"></div>
<div class="t" style="left:728.04px;top:359.33px;width:80px;font-size:15.5px;line-height:18px;color:#9a9a9a;text-align:center;letter-spacing:0.08px;">10</div>
<div class="a" style="left:787px;top:459px;width:55.5px;height:1px;background:#a4a4a4;"></div>
<div class="t" style="left:728.04px;top:448.33px;width:80px;font-size:15.5px;line-height:18px;color:#9a9a9a;text-align:center;letter-spacing:0.08px;">5</div>
<div class="a" style="left:787px;top:548px;width:55.5px;height:1px;background:#ffffff;"></div>
<div class="t" style="left:728.04px;top:537.33px;width:80px;font-size:15.5px;line-height:18px;color:#9a9a9a;text-align:center;letter-spacing:0.08px;">0</div>
<div class="a" style="left:787px;top:637px;width:55.5px;height:1px;background:#a4a4a4;"></div>
<div class="t" style="left:727.8px;top:626.33px;width:80px;font-size:15.5px;line-height:18px;color:#9a9a9a;text-align:center;letter-spacing:-0.40px;">-5</div>
<div class="a" style="left:787px;top:727px;width:55.5px;height:1px;background:#a4a4a4;"></div>
<div class="t" style="left:727.88px;top:716.33px;width:80px;font-size:15.5px;line-height:18px;color:#9a9a9a;text-align:center;letter-spacing:-0.24px;">-10</div>
<div class="a" style="left:787px;top:816px;width:55.5px;height:1px;background:#a4a4a4;"></div>
<div class="t" style="left:727.88px;top:805.33px;width:80px;font-size:15.5px;line-height:18px;color:#9a9a9a;text-align:center;letter-spacing:-0.24px;">-20</div>
<div class="a" style="left:787px;top:905px;width:55.5px;height:1px;background:#a4a4a4;"></div>
<div class="t" style="left:727.88px;top:894.33px;width:80px;font-size:15.5px;line-height:18px;color:#9a9a9a;text-align:center;letter-spacing:-0.24px;">-30</div>
<div class="a" style="left:787px;top:994px;width:55.5px;height:1px;background:#a4a4a4;"></div>
<div class="t" style="left:727.88px;top:983.33px;width:80px;font-size:15.5px;line-height:18px;color:#9a9a9a;text-align:center;letter-spacing:-0.24px;">-50</div>
<div class="a" style="left:868.75px;top:289.5px;width:5.25px;height:20.3px;background:#6d191c;"></div>
<div class="a" style="left:868.75px;top:309.8px;width:5.25px;height:252px;background:#71410f;"></div>
<div class="a" style="left:868.75px;top:561.8px;width:5.25px;height:581.2px;background:#2a3a18;"></div>
<div class="a" style="left:880px;top:558.7px;width:5px;height:184.8px;background:#ff2116;"></div>
<div class="a" style="left:787px;top:1027px;width:54.25px;height:111.75px;background:linear-gradient(to bottom,#a2a2a2 0,#cbcbcb 3.2%,#cbcbcb 16.6%,#b4b4b4 16.8%,#b0b0b0 18%,#8e8e8e 18.3%,#8e8e8e 19.6%,#a0a0a0 19.9%,#a0a0a0 20.6%,#8a8a8a 21%,#8a8a8a 30.4%,#9e9e9e 30.8%,#9e9e9e 38.3%,#c4c4c4 38.7%,#cfcfcf 45.8%,#ffffff 46.1%,#ffffff 50.2%,#cfcfcf 50.5%,#cfcfcf 59%,#b9b9b9 59.2%,#b9b9b9 59.6%,#cccccc 59.9%,#cccccc 66.8%,#bbbbbb 67%,#bbbbbb 67.4%,#e6e6e6 67.8%,#e6e6e6 76.3%,#c6c6c6 76.6%,#c6c6c6 77.3%,#e9e9e9 77.7%,#e9e9e9 81.4%,#b3b3b3 81.8%,#b2b2b2 97.5%,#8c8c8c 100%);border-radius:3px;box-shadow:4px 3px 6px rgba(0,0,0,0.22);"></div>
<div class="t" style="left:511.39px;top:1134.34px;width:600px;font-size:25px;line-height:30px;color:#fff;text-align:center;letter-spacing:0.27px;">Mtx 01</div>
<div class="a" style="left:890.37px;top:94px;width:131.25px;height:88.5px;background:#dddddd;"></div>
<div class="t" style="left:656.13px;top:124.31px;width:600px;font-size:25.5px;line-height:30px;color:#000;text-align:center;letter-spacing:0.28px;">Mtx 02</div>
<div class="a" style="left:890.37px;top:182.5px;width:131.25px;height:980px;background:#27292f;"></div>
<div class="a" style="left:890.37px;top:223px;width:131.25px;height:66.5px;background:#561616;"></div>
<div class="t" style="left:655.53px;top:242.31px;width:600px;font-size:25.5px;line-height:30px;color:#e4e4e4;text-align:center;letter-spacing:-0.93px;">MUTE</div>
<div class="t" style="left:647.12px;top:287.81px;width:600px;font-size:25.5px;line-height:30px;color:#fff;text-align:center;">-<span class="inf">∞</span></div>
<div class="a" style="left:945.37px;top:370px;width:12px;height:659px;background:#000;"></div>
<div class="a" style="left:923.62px;top:370px;width:55.5px;height:1px;background:#a4a4a4;"></div>
<div class="t" style="left:864.66px;top:359.33px;width:80px;font-size:15.5px;line-height:18px;color:#9a9a9a;text-align:center;letter-spacing:0.08px;">10</div>
<div class="a" style="left:923.62px;top:459px;width:55.5px;height:1px;background:#a4a4a4;"></div>
<div class="t" style="left:864.66px;top:448.33px;width:80px;font-size:15.5px;line-height:18px;color:#9a9a9a;text-align:center;letter-spacing:0.08px;">5</div>
<div class="a" style="left:923.62px;top:548px;width:55.5px;height:1px;background:#ffffff;"></div>
<div class="t" style="left:864.66px;top:537.33px;width:80px;font-size:15.5px;line-height:18px;color:#9a9a9a;text-align:center;letter-spacing:0.08px;">0</div>
<div class="a" style="left:923.62px;top:637px;width:55.5px;height:1px;background:#a4a4a4;"></div>
<div class="t" style="left:864.42px;top:626.33px;width:80px;font-size:15.5px;line-height:18px;color:#9a9a9a;text-align:center;letter-spacing:-0.40px;">-5</div>
<div class="a" style="left:923.62px;top:727px;width:55.5px;height:1px;background:#a4a4a4;"></div>
<div class="t" style="left:864.5px;top:716.33px;width:80px;font-size:15.5px;line-height:18px;color:#9a9a9a;text-align:center;letter-spacing:-0.24px;">-10</div>
<div class="a" style="left:923.62px;top:816px;width:55.5px;height:1px;background:#a4a4a4;"></div>
<div class="t" style="left:864.5px;top:805.33px;width:80px;font-size:15.5px;line-height:18px;color:#9a9a9a;text-align:center;letter-spacing:-0.24px;">-20</div>
<div class="a" style="left:923.62px;top:905px;width:55.5px;height:1px;background:#a4a4a4;"></div>
<div class="t" style="left:864.5px;top:894.33px;width:80px;font-size:15.5px;line-height:18px;color:#9a9a9a;text-align:center;letter-spacing:-0.24px;">-30</div>
<div class="a" style="left:923.62px;top:994px;width:55.5px;height:1px;background:#a4a4a4;"></div>
<div class="t" style="left:864.5px;top:983.33px;width:80px;font-size:15.5px;line-height:18px;color:#9a9a9a;text-align:center;letter-spacing:-0.24px;">-50</div>
<div class="a" style="left:1005.37px;top:289.5px;width:5.25px;height:20.3px;background:#6d191c;"></div>
<div class="a" style="left:1005.37px;top:309.8px;width:5.25px;height:252px;background:#71410f;"></div>
<div class="a" style="left:1005.37px;top:561.8px;width:5.25px;height:581.2px;background:#2a3a18;"></div>
<div class="a" style="left:1016.62px;top:558.7px;width:5px;height:184.8px;background:#ff2116;"></div>
<div class="a" style="left:923.62px;top:1027px;width:54.25px;height:111.75px;background:linear-gradient(to bottom,#a2a2a2 0,#cbcbcb 3.2%,#cbcbcb 16.6%,#b4b4b4 16.8%,#b0b0b0 18%,#8e8e8e 18.3%,#8e8e8e 19.6%,#a0a0a0 19.9%,#a0a0a0 20.6%,#8a8a8a 21%,#8a8a8a 30.4%,#9e9e9e 30.8%,#9e9e9e 38.3%,#c4c4c4 38.7%,#cfcfcf 45.8%,#ffffff 46.1%,#ffffff 50.2%,#cfcfcf 50.5%,#cfcfcf 59%,#b9b9b9 59.2%,#b9b9b9 59.6%,#cccccc 59.9%,#cccccc 66.8%,#bbbbbb 67%,#bbbbbb 67.4%,#e6e6e6 67.8%,#e6e6e6 76.3%,#c6c6c6 76.6%,#c6c6c6 77.3%,#e9e9e9 77.7%,#e9e9e9 81.4%,#b3b3b3 81.8%,#b2b2b2 97.5%,#8c8c8c 100%);border-radius:3px;box-shadow:4px 3px 6px rgba(0,0,0,0.22);"></div>
<div class="t" style="left:648.01px;top:1134.34px;width:600px;font-size:25px;line-height:30px;color:#fff;text-align:center;letter-spacing:0.27px;">Mtx 02</div>
<div class="a" style="left:1026.99px;top:94px;width:131.25px;height:88.5px;background:#dddddd;"></div>
<div class="t" style="left:792.75px;top:124.31px;width:600px;font-size:25.5px;line-height:30px;color:#000;text-align:center;letter-spacing:0.28px;">Mtx 03</div>
<div class="a" style="left:1026.99px;top:182.5px;width:131.25px;height:980px;background:#27292f;"></div>
<div class="a" style="left:1026.99px;top:223px;width:131.25px;height:66.5px;background:#561616;"></div>
<div class="t" style="left:792.15px;top:242.31px;width:600px;font-size:25.5px;line-height:30px;color:#e4e4e4;text-align:center;letter-spacing:-0.93px;">MUTE</div>
<div class="t" style="left:783.74px;top:287.81px;width:600px;font-size:25.5px;line-height:30px;color:#fff;text-align:center;">-<span class="inf">∞</span></div>
<div class="a" style="left:1081.99px;top:370px;width:12px;height:659px;background:#000;"></div>
<div class="a" style="left:1060.24px;top:370px;width:55.5px;height:1px;background:#a4a4a4;"></div>
<div class="t" style="left:1001.28px;top:359.33px;width:80px;font-size:15.5px;line-height:18px;color:#9a9a9a;text-align:center;letter-spacing:0.08px;">10</div>
<div class="a" style="left:1060.24px;top:459px;width:55.5px;height:1px;background:#a4a4a4;"></div>
<div class="t" style="left:1001.28px;top:448.33px;width:80px;font-size:15.5px;line-height:18px;color:#9a9a9a;text-align:center;letter-spacing:0.08px;">5</div>
<div class="a" style="left:1060.24px;top:548px;width:55.5px;height:1px;background:#ffffff;"></div>
<div class="t" style="left:1001.28px;top:537.33px;width:80px;font-size:15.5px;line-height:18px;color:#9a9a9a;text-align:center;letter-spacing:0.08px;">0</div>
<div class="a" style="left:1060.24px;top:637px;width:55.5px;height:1px;background:#a4a4a4;"></div>
<div class="t" style="left:1001.04px;top:626.33px;width:80px;font-size:15.5px;line-height:18px;color:#9a9a9a;text-align:center;letter-spacing:-0.40px;">-5</div>
<div class="a" style="left:1060.24px;top:727px;width:55.5px;height:1px;background:#a4a4a4;"></div>
<div class="t" style="left:1001.12px;top:716.33px;width:80px;font-size:15.5px;line-height:18px;color:#9a9a9a;text-align:center;letter-spacing:-0.24px;">-10</div>
<div class="a" style="left:1060.24px;top:816px;width:55.5px;height:1px;background:#a4a4a4;"></div>
<div class="t" style="left:1001.12px;top:805.33px;width:80px;font-size:15.5px;line-height:18px;color:#9a9a9a;text-align:center;letter-spacing:-0.24px;">-20</div>
<div class="a" style="left:1060.24px;top:905px;width:55.5px;height:1px;background:#a4a4a4;"></div>
<div class="t" style="left:1001.12px;top:894.33px;width:80px;font-size:15.5px;line-height:18px;color:#9a9a9a;text-align:center;letter-spacing:-0.24px;">-30</div>
<div class="a" style="left:1060.24px;top:994px;width:55.5px;height:1px;background:#a4a4a4;"></div>
<div class="t" style="left:1001.12px;top:983.33px;width:80px;font-size:15.5px;line-height:18px;color:#9a9a9a;text-align:center;letter-spacing:-0.24px;">-50</div>
<div class="a" style="left:1141.99px;top:289.5px;width:5.25px;height:20.3px;background:#6d191c;"></div>
<div class="a" style="left:1141.99px;top:309.8px;width:5.25px;height:252px;background:#71410f;"></div>
<div class="a" style="left:1141.99px;top:561.8px;width:5.25px;height:581.2px;background:#2a3a18;"></div>
<div class="a" style="left:1153.24px;top:558.7px;width:5px;height:184.8px;background:#ff2116;"></div>
<div class="a" style="left:1060.24px;top:1027px;width:54.25px;height:111.75px;background:linear-gradient(to bottom,#a2a2a2 0,#cbcbcb 3.2%,#cbcbcb 16.6%,#b4b4b4 16.8%,#b0b0b0 18%,#8e8e8e 18.3%,#8e8e8e 19.6%,#a0a0a0 19.9%,#a0a0a0 20.6%,#8a8a8a 21%,#8a8a8a 30.4%,#9e9e9e 30.8%,#9e9e9e 38.3%,#c4c4c4 38.7%,#cfcfcf 45.8%,#ffffff 46.1%,#ffffff 50.2%,#cfcfcf 50.5%,#cfcfcf 59%,#b9b9b9 59.2%,#b9b9b9 59.6%,#cccccc 59.9%,#cccccc 66.8%,#bbbbbb 67%,#bbbbbb 67.4%,#e6e6e6 67.8%,#e6e6e6 76.3%,#c6c6c6 76.6%,#c6c6c6 77.3%,#e9e9e9 77.7%,#e9e9e9 81.4%,#b3b3b3 81.8%,#b2b2b2 97.5%,#8c8c8c 100%);border-radius:3px;box-shadow:4px 3px 6px rgba(0,0,0,0.22);"></div>
<div class="t" style="left:784.63px;top:1134.34px;width:600px;font-size:25px;line-height:30px;color:#fff;text-align:center;letter-spacing:0.27px;">Mtx 03</div>
<div class="a" style="left:1163.61px;top:94px;width:131.25px;height:88.5px;background:#dddddd;"></div>
<div class="t" style="left:929.37px;top:124.31px;width:600px;font-size:25.5px;line-height:30px;color:#000;text-align:center;letter-spacing:0.28px;">Mtx 04</div>
<div class="a" style="left:1163.61px;top:182.5px;width:131.25px;height:980px;background:#27292f;"></div>
<div class="a" style="left:1163.61px;top:223px;width:131.25px;height:66.5px;background:#561616;"></div>
<div class="t" style="left:928.77px;top:242.31px;width:600px;font-size:25.5px;line-height:30px;color:#e4e4e4;text-align:center;letter-spacing:-0.93px;">MUTE</div>
<div class="t" style="left:920.36px;top:287.81px;width:600px;font-size:25.5px;line-height:30px;color:#fff;text-align:center;">-<span class="inf">∞</span></div>
<div class="a" style="left:1218.61px;top:370px;width:12px;height:659px;background:#000;"></div>
<div class="a" style="left:1196.86px;top:370px;width:55.5px;height:1px;background:#a4a4a4;"></div>
<div class="t" style="left:1137.9px;top:359.33px;width:80px;font-size:15.5px;line-height:18px;color:#9a9a9a;text-align:center;letter-spacing:0.08px;">10</div>
<div class="a" style="left:1196.86px;top:459px;width:55.5px;height:1px;background:#a4a4a4;"></div>
<div class="t" style="left:1137.9px;top:448.33px;width:80px;font-size:15.5px;line-height:18px;color:#9a9a9a;text-align:center;letter-spacing:0.08px;">5</div>
<div class="a" style="left:1196.86px;top:548px;width:55.5px;height:1px;background:#ffffff;"></div>
<div class="t" style="left:1137.9px;top:537.33px;width:80px;font-size:15.5px;line-height:18px;color:#9a9a9a;text-align:center;letter-spacing:0.08px;">0</div>
<div class="a" style="left:1196.86px;top:637px;width:55.5px;height:1px;background:#a4a4a4;"></div>
<div class="t" style="left:1137.66px;top:626.33px;width:80px;font-size:15.5px;line-height:18px;color:#9a9a9a;text-align:center;letter-spacing:-0.40px;">-5</div>
<div class="a" style="left:1196.86px;top:727px;width:55.5px;height:1px;background:#a4a4a4;"></div>
<div class="t" style="left:1137.74px;top:716.33px;width:80px;font-size:15.5px;line-height:18px;color:#9a9a9a;text-align:center;letter-spacing:-0.24px;">-10</div>
<div class="a" style="left:1196.86px;top:816px;width:55.5px;height:1px;background:#a4a4a4;"></div>
<div class="t" style="left:1137.74px;top:805.33px;width:80px;font-size:15.5px;line-height:18px;color:#9a9a9a;text-align:center;letter-spacing:-0.24px;">-20</div>
<div class="a" style="left:1196.86px;top:905px;width:55.5px;height:1px;background:#a4a4a4;"></div>
<div class="t" style="left:1137.74px;top:894.33px;width:80px;font-size:15.5px;line-height:18px;color:#9a9a9a;text-align:center;letter-spacing:-0.24px;">-30</div>
<div class="a" style="left:1196.86px;top:994px;width:55.5px;height:1px;background:#a4a4a4;"></div>
<div class="t" style="left:1137.74px;top:983.33px;width:80px;font-size:15.5px;line-height:18px;color:#9a9a9a;text-align:center;letter-spacing:-0.24px;">-50</div>
<div class="a" style="left:1278.61px;top:289.5px;width:5.25px;height:20.3px;background:#6d191c;"></div>
<div class="a" style="left:1278.61px;top:309.8px;width:5.25px;height:252px;background:#71410f;"></div>
<div class="a" style="left:1278.61px;top:561.8px;width:5.25px;height:581.2px;background:#2a3a18;"></div>
<div class="a" style="left:1289.86px;top:558.7px;width:5px;height:184.8px;background:#ff2116;"></div>
<div class="a" style="left:1196.86px;top:1027px;width:54.25px;height:111.75px;background:linear-gradient(to bottom,#a2a2a2 0,#cbcbcb 3.2%,#cbcbcb 16.6%,#b4b4b4 16.8%,#b0b0b0 18%,#8e8e8e 18.3%,#8e8e8e 19.6%,#a0a0a0 19.9%,#a0a0a0 20.6%,#8a8a8a 21%,#8a8a8a 30.4%,#9e9e9e 30.8%,#9e9e9e 38.3%,#c4c4c4 38.7%,#cfcfcf 45.8%,#ffffff 46.1%,#ffffff 50.2%,#cfcfcf 50.5%,#cfcfcf 59%,#b9b9b9 59.2%,#b9b9b9 59.6%,#cccccc 59.9%,#cccccc 66.8%,#bbbbbb 67%,#bbbbbb 67.4%,#e6e6e6 67.8%,#e6e6e6 76.3%,#c6c6c6 76.6%,#c6c6c6 77.3%,#e9e9e9 77.7%,#e9e9e9 81.4%,#b3b3b3 81.8%,#b2b2b2 97.5%,#8c8c8c 100%);border-radius:3px;box-shadow:4px 3px 6px rgba(0,0,0,0.22);"></div>
<div class="t" style="left:921.25px;top:1134.34px;width:600px;font-size:25px;line-height:30px;color:#fff;text-align:center;letter-spacing:0.27px;">Mtx 04</div>
<div class="a" style="left:1300.23px;top:94px;width:131.25px;height:88.5px;background:#dddddd;"></div>
<div class="t" style="left:1065.99px;top:124.31px;width:600px;font-size:25.5px;line-height:30px;color:#000;text-align:center;letter-spacing:0.28px;">Mtx 05</div>
<div class="a" style="left:1300.23px;top:182.5px;width:131.25px;height:980px;background:#27292f;"></div>
<div class="a" style="left:1300.23px;top:223px;width:131.25px;height:66.5px;background:#561616;"></div>
<div class="t" style="left:1065.39px;top:242.31px;width:600px;font-size:25.5px;line-height:30px;color:#e4e4e4;text-align:center;letter-spacing:-0.93px;">MUTE</div>
<div class="t" style="left:1056.98px;top:287.81px;width:600px;font-size:25.5px;line-height:30px;color:#fff;text-align:center;">-<span class="inf">∞</span></div>
<div class="a" style="left:1355.23px;top:370px;width:12px;height:659px;background:#000;"></div>
<div class="a" style="left:1333.48px;top:370px;width:55.5px;height:1px;background:#a4a4a4;"></div>
<div class="t" style="left:1274.52px;top:359.33px;width:80px;font-size:15.5px;line-height:18px;color:#9a9a9a;text-align:center;letter-spacing:0.08px;">10</div>
<div class="a" style="left:1333.48px;top:459px;width:55.5px;height:1px;background:#a4a4a4;"></div>
<div class="t" style="left:1274.52px;top:448.33px;width:80px;font-size:15.5px;line-height:18px;color:#9a9a9a;text-align:center;letter-spacing:0.08px;">5</div>
<div class="a" style="left:1333.48px;top:548px;width:55.5px;height:1px;background:#ffffff;"></div>
<div class="t" style="left:1274.52px;top:537.33px;width:80px;font-size:15.5px;line-height:18px;color:#9a9a9a;text-align:center;letter-spacing:0.08px;">0</div>
<div class="a" style="left:1333.48px;top:637px;width:55.5px;height:1px;background:#a4a4a4;"></div>
<div class="t" style="left:1274.28px;top:626.33px;width:80px;font-size:15.5px;line-height:18px;color:#9a9a9a;text-align:center;letter-spacing:-0.40px;">-5</div>
<div class="a" style="left:1333.48px;top:727px;width:55.5px;height:1px;background:#a4a4a4;"></div>
<div class="t" style="left:1274.36px;top:716.33px;width:80px;font-size:15.5px;line-height:18px;color:#9a9a9a;text-align:center;letter-spacing:-0.24px;">-10</div>
<div class="a" style="left:1333.48px;top:816px;width:55.5px;height:1px;background:#a4a4a4;"></div>
<div class="t" style="left:1274.36px;top:805.33px;width:80px;font-size:15.5px;line-height:18px;color:#9a9a9a;text-align:center;letter-spacing:-0.24px;">-20</div>
<div class="a" style="left:1333.48px;top:905px;width:55.5px;height:1px;background:#a4a4a4;"></div>
<div class="t" style="left:1274.36px;top:894.33px;width:80px;font-size:15.5px;line-height:18px;color:#9a9a9a;text-align:center;letter-spacing:-0.24px;">-30</div>
<div class="a" style="left:1333.48px;top:994px;width:55.5px;height:1px;background:#a4a4a4;"></div>
<div class="t" style="left:1274.36px;top:983.33px;width:80px;font-size:15.5px;line-height:18px;color:#9a9a9a;text-align:center;letter-spacing:-0.24px;">-50</div>
<div class="a" style="left:1415.23px;top:289.5px;width:5.25px;height:20.3px;background:#6d191c;"></div>
<div class="a" style="left:1415.23px;top:309.8px;width:5.25px;height:252px;background:#71410f;"></div>
<div class="a" style="left:1415.23px;top:561.8px;width:5.25px;height:581.2px;background:#2a3a18;"></div>
<div class="a" style="left:1426.48px;top:558.7px;width:5px;height:184.8px;background:#ff2116;"></div>
<div class="a" style="left:1333.48px;top:1027px;width:54.25px;height:111.75px;background:linear-gradient(to bottom,#a2a2a2 0,#cbcbcb 3.2%,#cbcbcb 16.6%,#b4b4b4 16.8%,#b0b0b0 18%,#8e8e8e 18.3%,#8e8e8e 19.6%,#a0a0a0 19.9%,#a0a0a0 20.6%,#8a8a8a 21%,#8a8a8a 30.4%,#9e9e9e 30.8%,#9e9e9e 38.3%,#c4c4c4 38.7%,#cfcfcf 45.8%,#ffffff 46.1%,#ffffff 50.2%,#cfcfcf 50.5%,#cfcfcf 59%,#b9b9b9 59.2%,#b9b9b9 59.6%,#cccccc 59.9%,#cccccc 66.8%,#bbbbbb 67%,#bbbbbb 67.4%,#e6e6e6 67.8%,#e6e6e6 76.3%,#c6c6c6 76.6%,#c6c6c6 77.3%,#e9e9e9 77.7%,#e9e9e9 81.4%,#b3b3b3 81.8%,#b2b2b2 97.5%,#8c8c8c 100%);border-radius:3px;box-shadow:4px 3px 6px rgba(0,0,0,0.22);"></div>
<div class="t" style="left:1057.87px;top:1134.34px;width:600px;font-size:25px;line-height:30px;color:#fff;text-align:center;letter-spacing:0.27px;">Mtx 05</div>
<div class="a" style="left:1436.85px;top:94px;width:131.25px;height:88.5px;background:#dddddd;"></div>
<div class="t" style="left:1202.61px;top:124.31px;width:600px;font-size:25.5px;line-height:30px;color:#000;text-align:center;letter-spacing:0.28px;">Mtx 06</div>
<div class="a" style="left:1436.85px;top:182.5px;width:131.25px;height:980px;background:#27292f;"></div>
<div class="a" style="left:1436.85px;top:223px;width:131.25px;height:66.5px;background:#561616;"></div>
<div class="t" style="left:1202.01px;top:242.31px;width:600px;font-size:25.5px;line-height:30px;color:#e4e4e4;text-align:center;letter-spacing:-0.93px;">MUTE</div>
<div class="t" style="left:1193.6px;top:287.81px;width:600px;font-size:25.5px;line-height:30px;color:#fff;text-align:center;">-<span class="inf">∞</span></div>
<div class="a" style="left:1491.85px;top:370px;width:12px;height:659px;background:#000;"></div>
<div class="a" style="left:1470.1px;top:370px;width:55.5px;height:1px;background:#a4a4a4;"></div>
<div class="t" style="left:1411.14px;top:359.33px;width:80px;font-size:15.5px;line-height:18px;color:#9a9a9a;text-align:center;letter-spacing:0.08px;">10</div>
<div class="a" style="left:1470.1px;top:459px;width:55.5px;height:1px;background:#a4a4a4;"></div>
<div class="t" style="left:1411.14px;top:448.33px;width:80px;font-size:15.5px;line-height:18px;color:#9a9a9a;text-align:center;letter-spacing:0.08px;">5</div>
<div class="a" style="left:1470.1px;top:548px;width:55.5px;height:1px;background:#ffffff;"></div>
<div class="t" style="left:1411.14px;top:537.33px;width:80px;font-size:15.5px;line-height:18px;color:#9a9a9a;text-align:center;letter-spacing:0.08px;">0</div>
<div class="a" style="left:1470.1px;top:637px;width:55.5px;height:1px;background:#a4a4a4;"></div>
<div class="t" style="left:1410.9px;top:626.33px;width:80px;font-size:15.5px;line-height:18px;color:#9a9a9a;text-align:center;letter-spacing:-0.40px;">-5</div>
<div class="a" style="left:1470.1px;top:727px;width:55.5px;height:1px;background:#a4a4a4;"></div>
<div class="t" style="left:1410.98px;top:716.33px;width:80px;font-size:15.5px;line-height:18px;color:#9a9a9a;text-align:center;letter-spacing:-0.24px;">-10</div>
<div class="a" style="left:1470.1px;top:816px;width:55.5px;height:1px;background:#a4a4a4;"></div>
<div class="t" style="left:1410.98px;top:805.33px;width:80px;font-size:15.5px;line-height:18px;color:#9a9a9a;text-align:center;letter-spacing:-0.24px;">-20</div>
<div class="a" style="left:1470.1px;top:905px;width:55.5px;height:1px;background:#a4a4a4;"></div>
<div class="t" style="left:1410.98px;top:894.33px;width:80px;font-size:15.5px;line-height:18px;color:#9a9a9a;text-align:center;letter-spacing:-0.24px;">-30</div>
<div class="a" style="left:1470.1px;top:994px;width:55.5px;height:1px;background:#a4a4a4;"></div>
<div class="t" style="left:1410.98px;top:983.33px;width:80px;font-size:15.5px;line-height:18px;color:#9a9a9a;text-align:center;letter-spacing:-0.24px;">-50</div>
<div class="a" style="left:1551.85px;top:289.5px;width:5.25px;height:20.3px;background:#6d191c;"></div>
<div class="a" style="left:1551.85px;top:309.8px;width:5.25px;height:252px;background:#71410f;"></div>
<div class="a" style="left:1551.85px;top:561.8px;width:5.25px;height:581.2px;background:#2a3a18;"></div>
<div class="a" style="left:1563.1px;top:558.7px;width:5px;height:184.8px;background:#ff2116;"></div>
<div class="a" style="left:1470.1px;top:1027px;width:54.25px;height:111.75px;background:linear-gradient(to bottom,#a2a2a2 0,#cbcbcb 3.2%,#cbcbcb 16.6%,#b4b4b4 16.8%,#b0b0b0 18%,#8e8e8e 18.3%,#8e8e8e 19.6%,#a0a0a0 19.9%,#a0a0a0 20.6%,#8a8a8a 21%,#8a8a8a 30.4%,#9e9e9e 30.8%,#9e9e9e 38.3%,#c4c4c4 38.7%,#cfcfcf 45.8%,#ffffff 46.1%,#ffffff 50.2%,#cfcfcf 50.5%,#cfcfcf 59%,#b9b9b9 59.2%,#b9b9b9 59.6%,#cccccc 59.9%,#cccccc 66.8%,#bbbbbb 67%,#bbbbbb 67.4%,#e6e6e6 67.8%,#e6e6e6 76.3%,#c6c6c6 76.6%,#c6c6c6 77.3%,#e9e9e9 77.7%,#e9e9e9 81.4%,#b3b3b3 81.8%,#b2b2b2 97.5%,#8c8c8c 100%);border-radius:3px;box-shadow:4px 3px 6px rgba(0,0,0,0.22);"></div>
<div class="t" style="left:1194.49px;top:1134.34px;width:600px;font-size:25px;line-height:30px;color:#fff;text-align:center;letter-spacing:0.27px;">Mtx 06</div>
<div class="a" style="left:1608px;top:94px;width:97px;height:88.5px;background:#dddddd;"></div>
<div class="t" style="left:1356.41px;top:109.31px;width:600px;font-size:25.5px;line-height:30px;color:#000;text-align:center;letter-spacing:-0.18px;">AuxIn</div>
<div class="t" style="left:1356.57px;top:139.31px;width:600px;font-size:25.5px;line-height:30px;color:#000;text-align:center;letter-spacing:0.14px;">03</div>
<div class="a" style="left:1608px;top:182.5px;width:97px;height:887px;background:#27292f;"></div>
<div class="a" style="left:1608px;top:183.4px;width:97px;height:39.8px;border:2px solid #655a5a;box-sizing:border-box;"></div>
<div class="a" style="left:1656.8px;top:184px;width:2.2px;height:39px;background:#fff;"></div>
<div class="a" style="left:1608px;top:223px;width:97px;height:66.5px;background:#561616;"></div>
<div class="t" style="left:1356.03px;top:242.31px;width:600px;font-size:25.5px;line-height:30px;color:#e4e4e4;text-align:center;letter-spacing:-0.93px;">MUTE</div>
<div class="t" style="left:1348.25px;top:285.56px;width:600px;font-size:25.5px;line-height:30px;color:#fff;text-align:center;">-<span class="inf">∞</span></div>
<div class="a" style="left:1648px;top:351px;width:8px;height:619px;background:#000;"></div>
<div class="a" style="left:1635px;top:351px;width:33px;height:1px;background:#a4a4a4;"></div>
<div class="t" style="left:1582.44px;top:340.33px;width:80px;font-size:15.5px;line-height:18px;color:#9a9a9a;text-align:center;letter-spacing:0.08px;">10</div>
<div class="a" style="left:1635px;top:434px;width:33px;height:1px;background:#a4a4a4;"></div>
<div class="t" style="left:1582.44px;top:423.33px;width:80px;font-size:15.5px;line-height:18px;color:#9a9a9a;text-align:center;letter-spacing:0.08px;">5</div>
<div class="a" style="left:1635px;top:516px;width:33px;height:1px;background:#ffffff;"></div>
<div class="t" style="left:1582.44px;top:505.33px;width:80px;font-size:15.5px;line-height:18px;color:#9a9a9a;text-align:center;letter-spacing:0.08px;">0</div>
<div class="a" style="left:1635px;top:598px;width:33px;height:1px;background:#a4a4a4;"></div>
<div class="t" style="left:1582.2px;top:587.33px;width:80px;font-size:15.5px;line-height:18px;color:#9a9a9a;text-align:center;letter-spacing:-0.40px;">-5</div>
<div class="a" style="left:1635px;top:680px;width:33px;height:1px;background:#a4a4a4;"></div>
<div class="t" style="left:1582.28px;top:669.33px;width:80px;font-size:15.5px;line-height:18px;color:#9a9a9a;text-align:center;letter-spacing:-0.24px;">-10</div>
<div class="a" style="left:1635px;top:762px;width:33px;height:1px;background:#a4a4a4;"></div>
<div class="t" style="left:1582.28px;top:751.33px;width:80px;font-size:15.5px;line-height:18px;color:#9a9a9a;text-align:center;letter-spacing:-0.24px;">-20</div>
<div class="a" style="left:1635px;top:844px;width:33px;height:1px;background:#a4a4a4;"></div>
<div class="t" style="left:1582.28px;top:833.33px;width:80px;font-size:15.5px;line-height:18px;color:#9a9a9a;text-align:center;letter-spacing:-0.24px;">-30</div>
<div class="a" style="left:1635px;top:927px;width:33px;height:1px;background:#a4a4a4;"></div>
<div class="t" style="left:1582.28px;top:916.33px;width:80px;font-size:15.5px;line-height:18px;color:#9a9a9a;text-align:center;letter-spacing:-0.24px;">-50</div>
<div class="a" style="left:1690px;top:289.5px;width:5px;height:20.3px;background:#6d191c;"></div>
<div class="a" style="left:1690px;top:309.8px;width:5px;height:213.95px;background:#71410f;"></div>
<div class="a" style="left:1690px;top:523.75px;width:5px;height:525.75px;background:#2a3a18;"></div>
<div class="a" style="left:1631.75px;top:968px;width:39.25px;height:80.75px;background:linear-gradient(to bottom,#a2a2a2 0,#cbcbcb 3.2%,#cbcbcb 16.6%,#b4b4b4 16.8%,#b0b0b0 18%,#8e8e8e 18.3%,#8e8e8e 19.6%,#a0a0a0 19.9%,#a0a0a0 20.6%,#8a8a8a 21%,#8a8a8a 30.4%,#9e9e9e 30.8%,#9e9e9e 38.3%,#c4c4c4 38.7%,#cfcfcf 45.8%,#ffffff 46.1%,#ffffff 50.2%,#cfcfcf 50.5%,#cfcfcf 59%,#b9b9b9 59.2%,#b9b9b9 59.6%,#cccccc 59.9%,#cccccc 66.8%,#bbbbbb 67%,#bbbbbb 67.4%,#e6e6e6 67.8%,#e6e6e6 76.3%,#c6c6c6 76.6%,#c6c6c6 77.3%,#e9e9e9 77.7%,#e9e9e9 81.4%,#b3b3b3 81.8%,#b2b2b2 97.5%,#8c8c8c 100%);border-radius:3px;box-shadow:4px 3px 6px rgba(0,0,0,0.22);"></div>
<div class="t" style="left:1348.95px;top:1039.46px;width:600px;font-size:15.4px;line-height:30px;color:#fff;text-align:center;letter-spacing:-0.10px;">AuxIn 03</div>
<div class="a" style="left:1711px;top:94px;width:97px;height:88.5px;background:#dddddd;"></div>
<div class="t" style="left:1459.41px;top:109.31px;width:600px;font-size:25.5px;line-height:30px;color:#000;text-align:center;letter-spacing:-0.18px;">AuxIn</div>
<div class="t" style="left:1459.57px;top:139.31px;width:600px;font-size:25.5px;line-height:30px;color:#000;text-align:center;letter-spacing:0.14px;">04</div>
<div class="a" style="left:1711px;top:182.5px;width:97px;height:887px;background:#27292f;"></div>
<div class="a" style="left:1711px;top:183.4px;width:97px;height:39.8px;border:2px solid #655a5a;box-sizing:border-box;"></div>
<div class="a" style="left:1759.8px;top:184px;width:2.2px;height:39px;background:#fff;"></div>
<div class="a" style="left:1711px;top:223px;width:97px;height:66.5px;background:#561616;"></div>
<div class="t" style="left:1459.03px;top:242.31px;width:600px;font-size:25.5px;line-height:30px;color:#e4e4e4;text-align:center;letter-spacing:-0.93px;">MUTE</div>
<div class="t" style="left:1451.25px;top:285.56px;width:600px;font-size:25.5px;line-height:30px;color:#fff;text-align:center;">-<span class="inf">∞</span></div>
<div class="a" style="left:1751px;top:351px;width:8px;height:619px;background:#000;"></div>
<div class="a" style="left:1738px;top:351px;width:33px;height:1px;background:#a4a4a4;"></div>
<div class="t" style="left:1685.44px;top:340.33px;width:80px;font-size:15.5px;line-height:18px;color:#9a9a9a;text-align:center;letter-spacing:0.08px;">10</div>
<div class="a" style="left:1738px;top:434px;width:33px;height:1px;background:#a4a4a4;"></div>
<div class="t" style="left:1685.44px;top:423.33px;width:80px;font-size:15.5px;line-height:18px;color:#9a9a9a;text-align:center;letter-spacing:0.08px;">5</div>
<div class="a" style="left:1738px;top:516px;width:33px;height:1px;background:#ffffff;"></div>
<div class="t" style="left:1685.44px;top:505.33px;width:80px;font-size:15.5px;line-height:18px;color:#9a9a9a;text-align:center;letter-spacing:0.08px;">0</div>
<div class="a" style="left:1738px;top:598px;width:33px;height:1px;background:#a4a4a4;"></div>
<div class="t" style="left:1685.2px;top:587.33px;width:80px;font-size:15.5px;line-height:18px;color:#9a9a9a;text-align:center;letter-spacing:-0.40px;">-5</div>
<div class="a" style="left:1738px;top:680px;width:33px;height:1px;background:#a4a4a4;"></div>
<div class="t" style="left:1685.28px;top:669.33px;width:80px;font-size:15.5px;line-height:18px;color:#9a9a9a;text-align:center;letter-spacing:-0.24px;">-10</div>
<div class="a" style="left:1738px;top:762px;width:33px;height:1px;background:#a4a4a4;"></div>
<div class="t" style="left:1685.28px;top:751.33px;width:80px;font-size:15.5px;line-height:18px;color:#9a9a9a;text-align:center;letter-spacing:-0.24px;">-20</div>
<div class="a" style="left:1738px;top:844px;width:33px;height:1px;background:#a4a4a4;"></div>
<div class="t" style="left:1685.28px;top:833.33px;width:80px;font-size:15.5px;line-height:18px;color:#9a9a9a;text-align:center;letter-spacing:-0.24px;">-30</div>
<div class="a" style="left:1738px;top:927px;width:33px;height:1px;background:#a4a4a4;"></div>
<div class="t" style="left:1685.28px;top:916.33px;width:80px;font-size:15.5px;line-height:18px;color:#9a9a9a;text-align:center;letter-spacing:-0.24px;">-50</div>
<div class="a" style="left:1793px;top:289.5px;width:5px;height:20.3px;background:#6d191c;"></div>
<div class="a" style="left:1793px;top:309.8px;width:5px;height:213.95px;background:#71410f;"></div>
<div class="a" style="left:1793px;top:523.75px;width:5px;height:525.75px;background:#2a3a18;"></div>
<div class="a" style="left:1734.75px;top:968px;width:39.25px;height:80.75px;background:linear-gradient(to bottom,#a2a2a2 0,#cbcbcb 3.2%,#cbcbcb 16.6%,#b4b4b4 16.8%,#b0b0b0 18%,#8e8e8e 18.3%,#8e8e8e 19.6%,#a0a0a0 19.9%,#a0a0a0 20.6%,#8a8a8a 21%,#8a8a8a 30.4%,#9e9e9e 30.8%,#9e9e9e 38.3%,#c4c4c4 38.7%,#cfcfcf 45.8%,#ffffff 46.1%,#ffffff 50.2%,#cfcfcf 50.5%,#cfcfcf 59%,#b9b9b9 59.2%,#b9b9b9 59.6%,#cccccc 59.9%,#cccccc 66.8%,#bbbbbb 67%,#bbbbbb 67.4%,#e6e6e6 67.8%,#e6e6e6 76.3%,#c6c6c6 76.6%,#c6c6c6 77.3%,#e9e9e9 77.7%,#e9e9e9 81.4%,#b3b3b3 81.8%,#b2b2b2 97.5%,#8c8c8c 100%);border-radius:3px;box-shadow:4px 3px 6px rgba(0,0,0,0.22);"></div>
<div class="t" style="left:1451.95px;top:1039.46px;width:600px;font-size:15.4px;line-height:30px;color:#fff;text-align:center;letter-spacing:-0.10px;">AuxIn 04</div>
<div class="a" style="left:1813px;top:94px;width:97px;height:88.5px;background:#dddddd;"></div>
<div class="t" style="left:1561.41px;top:109.31px;width:600px;font-size:25.5px;line-height:30px;color:#000;text-align:center;letter-spacing:-0.18px;">AuxIn</div>
<div class="t" style="left:1561.57px;top:139.31px;width:600px;font-size:25.5px;line-height:30px;color:#000;text-align:center;letter-spacing:0.14px;">05</div>
<div class="a" style="left:1813px;top:182.5px;width:97px;height:887px;background:#27292f;"></div>
<div class="a" style="left:1813px;top:183.4px;width:97px;height:39.8px;border:2px solid #655a5a;box-sizing:border-box;"></div>
<div class="a" style="left:1861.8px;top:184px;width:2.2px;height:39px;background:#fff;"></div>
<div class="a" style="left:1813px;top:223px;width:97px;height:66.5px;background:#561616;"></div>
<div class="t" style="left:1561.03px;top:242.31px;width:600px;font-size:25.5px;line-height:30px;color:#e4e4e4;text-align:center;letter-spacing:-0.93px;">MUTE</div>
<div class="t" style="left:1553.25px;top:285.56px;width:600px;font-size:25.5px;line-height:30px;color:#fff;text-align:center;">-<span class="inf">∞</span></div>
<div class="a" style="left:1853px;top:351px;width:8px;height:619px;background:#000;"></div>
<div class="a" style="left:1840px;top:351px;width:33px;height:1px;background:#a4a4a4;"></div>
<div class="t" style="left:1787.44px;top:340.33px;width:80px;font-size:15.5px;line-height:18px;color:#9a9a9a;text-align:center;letter-spacing:0.08px;">10</div>
<div class="a" style="left:1840px;top:434px;width:33px;height:1px;background:#a4a4a4;"></div>
<div class="t" style="left:1787.44px;top:423.33px;width:80px;font-size:15.5px;line-height:18px;color:#9a9a9a;text-align:center;letter-spacing:0.08px;">5</div>
<div class="a" style="left:1840px;top:516px;width:33px;height:1px;background:#ffffff;"></div>
<div class="t" style="left:1787.44px;top:505.33px;width:80px;font-size:15.5px;line-height:18px;color:#9a9a9a;text-align:center;letter-spacing:0.08px;">0</div>
<div class="a" style="left:1840px;top:598px;width:33px;height:1px;background:#a4a4a4;"></div>
<div class="t" style="left:1787.2px;top:587.33px;width:80px;font-size:15.5px;line-height:18px;color:#9a9a9a;text-align:center;letter-spacing:-0.40px;">-5</div>
<div class="a" style="left:1840px;top:680px;width:33px;height:1px;background:#a4a4a4;"></div>
<div class="t" style="left:1787.28px;top:669.33px;width:80px;font-size:15.5px;line-height:18px;color:#9a9a9a;text-align:center;letter-spacing:-0.24px;">-10</div>
<div class="a" style="left:1840px;top:762px;width:33px;height:1px;background:#a4a4a4;"></div>
<div class="t" style="left:1787.28px;top:751.33px;width:80px;font-size:15.5px;line-height:18px;color:#9a9a9a;text-align:center;letter-spacing:-0.24px;">-20</div>
<div class="a" style="left:1840px;top:844px;width:33px;height:1px;background:#a4a4a4;"></div>
<div class="t" style="left:1787.28px;top:833.33px;width:80px;font-size:15.5px;line-height:18px;color:#9a9a9a;text-align:center;letter-spacing:-0.24px;">-30</div>
<div class="a" style="left:1840px;top:927px;width:33px;height:1px;background:#a4a4a4;"></div>
<div class="t" style="left:1787.28px;top:916.33px;width:80px;font-size:15.5px;line-height:18px;color:#9a9a9a;text-align:center;letter-spacing:-0.24px;">-50</div>
<div class="a" style="left:1895px;top:289.5px;width:5px;height:20.3px;background:#6d191c;"></div>
<div class="a" style="left:1895px;top:309.8px;width:5px;height:213.95px;background:#71410f;"></div>
<div class="a" style="left:1895px;top:523.75px;width:5px;height:525.75px;background:#2a3a18;"></div>
<div class="a" style="left:1836.75px;top:968px;width:39.25px;height:80.75px;background:linear-gradient(to bottom,#a2a2a2 0,#cbcbcb 3.2%,#cbcbcb 16.6%,#b4b4b4 16.8%,#b0b0b0 18%,#8e8e8e 18.3%,#8e8e8e 19.6%,#a0a0a0 19.9%,#a0a0a0 20.6%,#8a8a8a 21%,#8a8a8a 30.4%,#9e9e9e 30.8%,#9e9e9e 38.3%,#c4c4c4 38.7%,#cfcfcf 45.8%,#ffffff 46.1%,#ffffff 50.2%,#cfcfcf 50.5%,#cfcfcf 59%,#b9b9b9 59.2%,#b9b9b9 59.6%,#cccccc 59.9%,#cccccc 66.8%,#bbbbbb 67%,#bbbbbb 67.4%,#e6e6e6 67.8%,#e6e6e6 76.3%,#c6c6c6 76.6%,#c6c6c6 77.3%,#e9e9e9 77.7%,#e9e9e9 81.4%,#b3b3b3 81.8%,#b2b2b2 97.5%,#8c8c8c 100%);border-radius:3px;box-shadow:4px 3px 6px rgba(0,0,0,0.22);"></div>
<div class="t" style="left:1553.95px;top:1039.46px;width:600px;font-size:15.4px;line-height:30px;color:#fff;text-align:center;letter-spacing:-0.10px;">AuxIn 05</div>
<div class="a" style="left:1915px;top:94px;width:97px;height:88.5px;background:#dddddd;"></div>
<div class="t" style="left:1663.41px;top:109.31px;width:600px;font-size:25.5px;line-height:30px;color:#000;text-align:center;letter-spacing:-0.18px;">AuxIn</div>
<div class="t" style="left:1663.57px;top:139.31px;width:600px;font-size:25.5px;line-height:30px;color:#000;text-align:center;letter-spacing:0.14px;">06</div>
<div class="a" style="left:1915px;top:182.5px;width:97px;height:887px;background:#27292f;"></div>
<div class="a" style="left:1915px;top:183.4px;width:97px;height:39.8px;border:2px solid #655a5a;box-sizing:border-box;"></div>
<div class="a" style="left:1963.8px;top:184px;width:2.2px;height:39px;background:#fff;"></div>
<div class="a" style="left:1915px;top:223px;width:97px;height:66.5px;background:#561616;"></div>
<div class="t" style="left:1663.03px;top:242.31px;width:600px;font-size:25.5px;line-height:30px;color:#e4e4e4;text-align:center;letter-spacing:-0.93px;">MUTE</div>
<div class="t" style="left:1655.25px;top:285.56px;width:600px;font-size:25.5px;line-height:30px;color:#fff;text-align:center;">-<span class="inf">∞</span></div>
<div class="a" style="left:1955px;top:351px;width:8px;height:619px;background:#000;"></div>
<div class="a" style="left:1942px;top:351px;width:33px;height:1px;background:#a4a4a4;"></div>
<div class="t" style="left:1889.44px;top:340.33px;width:80px;font-size:15.5px;line-height:18px;color:#9a9a9a;text-align:center;letter-spacing:0.08px;">10</div>
<div class="a" style="left:1942px;top:434px;width:33px;height:1px;background:#a4a4a4;"></div>
<div class="t" style="left:1889.44px;top:423.33px;width:80px;font-size:15.5px;line-height:18px;color:#9a9a9a;text-align:center;letter-spacing:0.08px;">5</div>
<div class="a" style="left:1942px;top:516px;width:33px;height:1px;background:#ffffff;"></div>
<div class="t" style="left:1889.44px;top:505.33px;width:80px;font-size:15.5px;line-height:18px;color:#9a9a9a;text-align:center;letter-spacing:0.08px;">0</div>
<div class="a" style="left:1942px;top:598px;width:33px;height:1px;background:#a4a4a4;"></div>
<div class="t" style="left:1889.2px;top:587.33px;width:80px;font-size:15.5px;line-height:18px;color:#9a9a9a;text-align:center;letter-spacing:-0.40px;">-5</div>
<div class="a" style="left:1942px;top:680px;width:33px;height:1px;background:#a4a4a4;"></div>
<div class="t" style="left:1889.28px;top:669.33px;width:80px;font-size:15.5px;line-height:18px;color:#9a9a9a;text-align:center;letter-spacing:-0.24px;">-10</div>
<div class="a" style="left:1942px;top:762px;width:33px;height:1px;background:#a4a4a4;"></div>
<div class="t" style="left:1889.28px;top:751.33px;width:80px;font-size:15.5px;line-height:18px;color:#9a9a9a;text-align:center;letter-spacing:-0.24px;">-20</div>
<div class="a" style="left:1942px;top:844px;width:33px;height:1px;background:#a4a4a4;"></div>
<div class="t" style="left:1889.28px;top:833.33px;width:80px;font-size:15.5px;line-height:18px;color:#9a9a9a;text-align:center;letter-spacing:-0.24px;">-30</div>
<div class="a" style="left:1942px;top:927px;width:33px;height:1px;background:#a4a4a4;"></div>
<div class="t" style="left:1889.28px;top:916.33px;width:80px;font-size:15.5px;line-height:18px;color:#9a9a9a;text-align:center;letter-spacing:-0.24px;">-50</div>
<div class="a" style="left:1997px;top:289.5px;width:5px;height:20.3px;background:#6d191c;"></div>
<div class="a" style="left:1997px;top:309.8px;width:5px;height:213.95px;background:#71410f;"></div>
<div class="a" style="left:1997px;top:523.75px;width:5px;height:525.75px;background:#2a3a18;"></div>
<div class="a" style="left:1938.75px;top:968px;width:39.25px;height:80.75px;background:linear-gradient(to bottom,#a2a2a2 0,#cbcbcb 3.2%,#cbcbcb 16.6%,#b4b4b4 16.8%,#b0b0b0 18%,#8e8e8e 18.3%,#8e8e8e 19.6%,#a0a0a0 19.9%,#a0a0a0 20.6%,#8a8a8a 21%,#8a8a8a 30.4%,#9e9e9e 30.8%,#9e9e9e 38.3%,#c4c4c4 38.7%,#cfcfcf 45.8%,#ffffff 46.1%,#ffffff 50.2%,#cfcfcf 50.5%,#cfcfcf 59%,#b9b9b9 59.2%,#b9b9b9 59.6%,#cccccc 59.9%,#cccccc 66.8%,#bbbbbb 67%,#bbbbbb 67.4%,#e6e6e6 67.8%,#e6e6e6 76.3%,#c6c6c6 76.6%,#c6c6c6 77.3%,#e9e9e9 77.7%,#e9e9e9 81.4%,#b3b3b3 81.8%,#b2b2b2 97.5%,#8c8c8c 100%);border-radius:3px;box-shadow:4px 3px 6px rgba(0,0,0,0.22);"></div>
<div class="t" style="left:1655.95px;top:1039.46px;width:600px;font-size:15.4px;line-height:30px;color:#fff;text-align:center;letter-spacing:-0.10px;">AuxIn 06</div>
<div class="a" style="left:2017.75px;top:94px;width:96px;height:88.5px;background:#dddddd;"></div>
<div class="t" style="left:1765.44px;top:124.31px;width:600px;font-size:25.5px;line-height:30px;color:#000;text-align:center;letter-spacing:-0.62px;">DCA 4</div>
<div class="a" style="left:2017.75px;top:182.5px;width:96px;height:1120px;background:#27292f;"></div>
<div class="a" style="left:2017.75px;top:223px;width:96px;height:66.5px;background:#561616;"></div>
<div class="t" style="left:1765.28px;top:242.31px;width:600px;font-size:25.5px;line-height:30px;color:#e4e4e4;text-align:center;letter-spacing:-0.93px;">MUTE</div>
<div class="t" style="left:1758.12px;top:290.06px;width:600px;font-size:25.5px;line-height:30px;color:#fff;text-align:center;">-<span class="inf">∞</span></div>
<div class="a" style="left:2057px;top:351px;width:8.5px;height:852px;background:#000;"></div>
<div class="a" style="left:2045px;top:351px;width:32.5px;height:1px;background:#a4a4a4;"></div>
<div class="t" style="left:1992.19px;top:340.33px;width:80px;font-size:15.5px;line-height:18px;color:#9a9a9a;text-align:center;letter-spacing:0.08px;">10</div>
<div class="a" style="left:2045px;top:463px;width:32.5px;height:1px;background:#a4a4a4;"></div>
<div class="t" style="left:1992.19px;top:452.33px;width:80px;font-size:15.5px;line-height:18px;color:#9a9a9a;text-align:center;letter-spacing:0.08px;">5</div>
<div class="a" style="left:2045px;top:574px;width:32.5px;height:1px;background:#ffffff;"></div>
<div class="t" style="left:1992.19px;top:563.33px;width:80px;font-size:15.5px;line-height:18px;color:#9a9a9a;text-align:center;letter-spacing:0.08px;">0</div>
<div class="a" style="left:2045px;top:685px;width:32.5px;height:1px;background:#a4a4a4;"></div>
<div class="t" style="left:1991.95px;top:674.33px;width:80px;font-size:15.5px;line-height:18px;color:#9a9a9a;text-align:center;letter-spacing:-0.40px;">-5</div>
<div class="a" style="left:2045px;top:797px;width:32.5px;height:1px;background:#a4a4a4;"></div>
<div class="t" style="left:1992.03px;top:786.33px;width:80px;font-size:15.5px;line-height:18px;color:#9a9a9a;text-align:center;letter-spacing:-0.24px;">-10</div>
<div class="a" style="left:2045px;top:908px;width:32.5px;height:1px;background:#a4a4a4;"></div>
<div class="t" style="left:1992.03px;top:897.33px;width:80px;font-size:15.5px;line-height:18px;color:#9a9a9a;text-align:center;letter-spacing:-0.24px;">-20</div>
<div class="a" style="left:2045px;top:1020px;width:32.5px;height:1px;background:#a4a4a4;"></div>
<div class="t" style="left:1992.03px;top:1009.33px;width:80px;font-size:15.5px;line-height:18px;color:#9a9a9a;text-align:center;letter-spacing:-0.24px;">-30</div>
<div class="a" style="left:2045px;top:1131px;width:32.5px;height:1px;background:#a4a4a4;"></div>
<div class="t" style="left:1992.03px;top:1120.33px;width:80px;font-size:15.5px;line-height:18px;color:#9a9a9a;text-align:center;letter-spacing:-0.24px;">-50</div>
<div class="a" style="left:2100px;top:289.5px;width:3.75px;height:20.3px;background:#6d191c;"></div>
<div class="a" style="left:2100px;top:309.8px;width:3.75px;height:291.9px;background:#71410f;"></div>
<div class="a" style="left:2100px;top:601.7px;width:3.75px;height:681.3px;background:#2a3a18;"></div>
<div class="a" style="left:2041.75px;top:1201px;width:39px;height:81px;background:linear-gradient(to bottom,#a2a2a2 0,#cbcbcb 3.2%,#cbcbcb 16.6%,#b4b4b4 16.8%,#b0b0b0 18%,#8e8e8e 18.3%,#8e8e8e 19.6%,#a0a0a0 19.9%,#a0a0a0 20.6%,#8a8a8a 21%,#8a8a8a 30.4%,#9e9e9e 30.8%,#9e9e9e 38.3%,#c4c4c4 38.7%,#cfcfcf 45.8%,#ffffff 46.1%,#ffffff 50.2%,#cfcfcf 50.5%,#cfcfcf 59%,#b9b9b9 59.2%,#b9b9b9 59.6%,#cccccc 59.9%,#cccccc 66.8%,#bbbbbb 67%,#bbbbbb 67.4%,#e6e6e6 67.8%,#e6e6e6 76.3%,#c6c6c6 76.6%,#c6c6c6 77.3%,#e9e9e9 77.7%,#e9e9e9 81.4%,#b3b3b3 81.8%,#b2b2b2 97.5%,#8c8c8c 100%);border-radius:3px;box-shadow:4px 3px 6px rgba(0,0,0,0.22);"></div>
<div class="t" style="left:1758.57px;top:1273.84px;width:600px;font-size:25px;line-height:30px;color:#fff;text-align:center;letter-spacing:-0.61px;">DCA 4</div>
<div class="a" style="left:2155px;top:280.75px;width:130px;height:89.25px;background:#dddddd;"></div>
<div class="t" style="left:1920.2px;top:311.44px;width:600px;font-size:25.5px;line-height:30px;color:#000;text-align:center;letter-spacing:0.41px;">Mono</div>
<div class="a" style="left:2155px;top:370px;width:130px;height:979.5px;background:#27292f;"></div>
<div class="a" style="left:2155px;top:409.5px;width:130px;height:67.25px;background:#561616;"></div>
<div class="t" style="left:1919.53px;top:429.19px;width:600px;font-size:25.5px;line-height:30px;color:#e4e4e4;text-align:center;letter-spacing:-0.93px;">MUTE</div>
<div class="t" style="left:1911.25px;top:474.06px;width:600px;font-size:25.5px;line-height:30px;color:#fff;text-align:center;">-<span class="inf">∞</span></div>
<div class="a" style="left:2208.75px;top:557px;width:12px;height:658.75px;background:#000;"></div>
<div class="a" style="left:2187px;top:557px;width:56.75px;height:1px;background:#a4a4a4;"></div>
<div class="t" style="left:2129.29px;top:546.33px;width:80px;font-size:15.5px;line-height:18px;color:#9a9a9a;text-align:center;letter-spacing:0.08px;">10</div>
<div class="a" style="left:2187px;top:646px;width:56.75px;height:1px;background:#a4a4a4;"></div>
<div class="t" style="left:2129.29px;top:635.33px;width:80px;font-size:15.5px;line-height:18px;color:#9a9a9a;text-align:center;letter-spacing:0.08px;">5</div>
<div class="a" style="left:2187px;top:735px;width:56.75px;height:1px;background:#ffffff;"></div>
<div class="t" style="left:2129.29px;top:724.33px;width:80px;font-size:15.5px;line-height:18px;color:#9a9a9a;text-align:center;letter-spacing:0.08px;">0</div>
<div class="a" style="left:2187px;top:824px;width:56.75px;height:1px;background:#a4a4a4;"></div>
<div class="t" style="left:2129.05px;top:813.33px;width:80px;font-size:15.5px;line-height:18px;color:#9a9a9a;text-align:center;letter-spacing:-0.40px;">-5</div>
<div class="a" style="left:2187px;top:914px;width:56.75px;height:1px;background:#a4a4a4;"></div>
<div class="t" style="left:2129.13px;top:903.33px;width:80px;font-size:15.5px;line-height:18px;color:#9a9a9a;text-align:center;letter-spacing:-0.24px;">-10</div>
<div class="a" style="left:2187px;top:1003px;width:56.75px;height:1px;background:#a4a4a4;"></div>
<div class="t" style="left:2129.13px;top:992.33px;width:80px;font-size:15.5px;line-height:18px;color:#9a9a9a;text-align:center;letter-spacing:-0.24px;">-20</div>
<div class="a" style="left:2187px;top:1092px;width:56.75px;height:1px;background:#a4a4a4;"></div>
<div class="t" style="left:2129.13px;top:1081.33px;width:80px;font-size:15.5px;line-height:18px;color:#9a9a9a;text-align:center;letter-spacing:-0.24px;">-30</div>
<div class="a" style="left:2187px;top:1181px;width:56.75px;height:1px;background:#a4a4a4;"></div>
<div class="t" style="left:2129.13px;top:1170.33px;width:80px;font-size:15.5px;line-height:18px;color:#9a9a9a;text-align:center;letter-spacing:-0.24px;">-50</div>
<div class="a" style="left:2269px;top:476.75px;width:5px;height:20.3px;background:#6d191c;"></div>
<div class="a" style="left:2269px;top:497.05px;width:5px;height:251.7px;background:#71410f;"></div>
<div class="a" style="left:2269px;top:748.75px;width:5px;height:582px;background:#2a3a18;"></div>
<div class="a" style="left:2280px;top:745.75px;width:5px;height:183.75px;background:#ff2116;"></div>
<div class="a" style="left:2187px;top:1213.75px;width:53.75px;height:112px;background:linear-gradient(to bottom,#a2a2a2 0,#cbcbcb 3.2%,#cbcbcb 16.6%,#b4b4b4 16.8%,#b0b0b0 18%,#8e8e8e 18.3%,#8e8e8e 19.6%,#a0a0a0 19.9%,#a0a0a0 20.6%,#8a8a8a 21%,#8a8a8a 30.4%,#9e9e9e 30.8%,#9e9e9e 38.3%,#c4c4c4 38.7%,#cfcfcf 45.8%,#ffffff 46.1%,#ffffff 50.2%,#cfcfcf 50.5%,#cfcfcf 59%,#b9b9b9 59.2%,#b9b9b9 59.6%,#cccccc 59.9%,#cccccc 66.8%,#bbbbbb 67%,#bbbbbb 67.4%,#e6e6e6 67.8%,#e6e6e6 76.3%,#c6c6c6 76.6%,#c6c6c6 77.3%,#e9e9e9 77.7%,#e9e9e9 81.4%,#b3b3b3 81.8%,#b2b2b2 97.5%,#8c8c8c 100%);border-radius:3px;box-shadow:4px 3px 6px rgba(0,0,0,0.22);"></div>
<div class="t" style="left:1912.2px;top:1321.84px;width:600px;font-size:25px;line-height:30px;color:#fff;text-align:center;letter-spacing:0.40px;">Mono</div>
<div class="a" style="left:2290.75px;top:94px;width:165px;height:88.5px;background:#dddddd;"></div>
<div class="t" style="left:2072.46px;top:124.31px;width:600px;font-size:25.5px;line-height:30px;color:#000;text-align:center;letter-spacing:-1.59px;">LR</div>
<div class="a" style="left:2290.75px;top:182.5px;width:165px;height:1167px;background:#27292f;"></div>
<div class="a" style="left:2290.75px;top:183.4px;width:165px;height:39.8px;border:2px solid #655a5a;box-sizing:border-box;"></div>
<div class="a" style="left:2373.55px;top:184px;width:2.2px;height:39px;background:#fff;"></div>
<div class="a" style="left:2290.75px;top:223px;width:165px;height:66.5px;background:#561616;"></div>
<div class="t" style="left:2072.78px;top:242.31px;width:600px;font-size:25.5px;line-height:30px;color:#e4e4e4;text-align:center;letter-spacing:-0.93px;">MUTE</div>
<div class="t" style="left:2062.12px;top:290.06px;width:600px;font-size:25.5px;line-height:30px;color:#fff;text-align:center;">-<span class="inf">∞</span></div>
<div class="a" style="left:2360px;top:387px;width:14.75px;height:796px;background:#000;"></div>
<div class="a" style="left:2328px;top:387px;width:78.75px;height:1px;background:#a4a4a4;"></div>
<div class="t" style="left:2265.04px;top:376.33px;width:80px;font-size:15.5px;line-height:18px;color:#9a9a9a;text-align:center;letter-spacing:0.08px;">10</div>
<div class="a" style="left:2328px;top:496px;width:78.75px;height:1px;background:#a4a4a4;"></div>
<div class="t" style="left:2265.04px;top:485.33px;width:80px;font-size:15.5px;line-height:18px;color:#9a9a9a;text-align:center;letter-spacing:0.08px;">5</div>
<div class="a" style="left:2328px;top:604px;width:78.75px;height:1px;background:#ffffff;"></div>
<div class="t" style="left:2265.04px;top:593.33px;width:80px;font-size:15.5px;line-height:18px;color:#9a9a9a;text-align:center;letter-spacing:0.08px;">0</div>
<div class="a" style="left:2328px;top:712px;width:78.75px;height:1px;background:#a4a4a4;"></div>
<div class="t" style="left:2264.8px;top:701.33px;width:80px;font-size:15.5px;line-height:18px;color:#9a9a9a;text-align:center;letter-spacing:-0.40px;">-5</div>
<div class="a" style="left:2328px;top:820px;width:78.75px;height:1px;background:#a4a4a4;"></div>
<div class="t" style="left:2264.88px;top:809.33px;width:80px;font-size:15.5px;line-height:18px;color:#9a9a9a;text-align:center;letter-spacing:-0.24px;">-10</div>
<div class="a" style="left:2328px;top:928px;width:78.75px;height:1px;background:#a4a4a4;"></div>
<div class="t" style="left:2264.88px;top:917.33px;width:80px;font-size:15.5px;line-height:18px;color:#9a9a9a;text-align:center;letter-spacing:-0.24px;">-20</div>
<div class="a" style="left:2328px;top:1037px;width:78.75px;height:1px;background:#a4a4a4;"></div>
<div class="t" style="left:2264.88px;top:1026.33px;width:80px;font-size:15.5px;line-height:18px;color:#9a9a9a;text-align:center;letter-spacing:-0.24px;">-30</div>
<div class="a" style="left:2328px;top:1145px;width:78.75px;height:1px;background:#a4a4a4;"></div>
<div class="t" style="left:2264.88px;top:1134.33px;width:80px;font-size:15.5px;line-height:18px;color:#9a9a9a;text-align:center;letter-spacing:-0.24px;">-50</div>
<div class="a" style="left:2435px;top:289.5px;width:12px;height:20.3px;background:#6d191c;"></div>
<div class="a" style="left:2435px;top:309.8px;width:12px;height:293.95px;background:#71410f;"></div>
<div class="a" style="left:2435px;top:603.75px;width:12px;height:725.75px;background:#2a3a18;"></div>
<div class="a" style="left:2448.75px;top:615.75px;width:7px;height:225px;background:#ff2116;"></div>
<div class="a" style="left:2332px;top:1181px;width:68px;height:142.75px;background:linear-gradient(to bottom,#a2a2a2 0,#cbcbcb 3.2%,#cbcbcb 16.6%,#b4b4b4 16.8%,#b0b0b0 18%,#8e8e8e 18.3%,#8e8e8e 19.6%,#a0a0a0 19.9%,#a0a0a0 20.6%,#8a8a8a 21%,#8a8a8a 30.4%,#9e9e9e 30.8%,#9e9e9e 38.3%,#c4c4c4 38.7%,#cfcfcf 45.8%,#ffffff 46.1%,#ffffff 50.2%,#cfcfcf 50.5%,#cfcfcf 59%,#b9b9b9 59.2%,#b9b9b9 59.6%,#cccccc 59.9%,#cccccc 66.8%,#bbbbbb 67%,#bbbbbb 67.4%,#e6e6e6 67.8%,#e6e6e6 76.3%,#c6c6c6 76.6%,#c6c6c6 77.3%,#e9e9e9 77.7%,#e9e9e9 81.4%,#b3b3b3 81.8%,#b2b2b2 97.5%,#8c8c8c 100%);border-radius:3px;box-shadow:4px 3px 6px rgba(0,0,0,0.22);"></div>
<div class="t" style="left:2062.1px;top:1321.84px;width:600px;font-size:25px;line-height:30px;color:#fff;text-align:center;letter-spacing:-1.56px;">LR</div>
<div class="a" style="left:310px;top:1217px;width:1667.5px;height:132.5px;border:2px solid #6c6060;box-sizing:border-box;"></div>
<div class="t" style="left:1642.5px;top:1267.96px;width:600px;font-size:25.5px;line-height:30px;color:#fff;text-align:center;">-<span class="inf">∞</span></div>
<div class="a" style="left:379.5px;top:1356.2px;width:232.2px;height:180.3px;background:#7a7a7a;border-radius:5px;box-sizing:border-box;border:2px solid #4f4f5f;"></div>
<div class="t" style="left:189.78px;top:1415.41px;width:600px;font-size:25.5px;line-height:30px;color:#000;text-align:center;letter-spacing:-1.63px;">USB</div>
<div class="t" style="left:190.44px;top:1445.41px;width:600px;font-size:25.5px;line-height:30px;color:#000;text-align:center;letter-spacing:-0.33px;">Recorder</div>
<div class="a" style="left:379.5px;top:1543px;width:232.2px;height:180.5px;background:#7a7a7a;border-radius:5px;box-sizing:border-box;border:2px solid #4f4f5f;"></div>
<div class="t" style="left:195.31px;top:1617.31px;width:600px;font-size:25.5px;line-height:30px;color:#000;text-align:center;letter-spacing:-0.58px;">X-Live</div>
<div class="a" style="left:618px;top:1356.2px;width:300.8px;height:86.5px;background:#561616;border-radius:5px;box-sizing:border-box;"></div>
<div class="t" style="left:468.36px;top:1384.81px;width:600px;font-size:25.5px;line-height:30px;color:#e8e8e8;text-align:center;letter-spacing:-0.07px;">00:00</div>
<div class="a" style="left:618px;top:1448.8px;width:300.8px;height:88px;background:#561616;border-radius:5px;box-sizing:border-box;"></div>
<div class="t" style="left:468.36px;top:1478.16px;width:600px;font-size:25.5px;line-height:30px;color:#e8e8e8;text-align:center;letter-spacing:-0.07px;">00:00</div>
<div class="a" style="left:618px;top:1543px;width:300.8px;height:86.4px;background:#561616;border-radius:5px;box-sizing:border-box;"></div>
<div class="t" style="left:468.41px;top:1571.56px;width:600px;font-size:25.5px;line-height:30px;color:#e8e8e8;text-align:center;letter-spacing:0.01px;">00h 00m 00s 00</div>
<div class="a" style="left:618px;top:1636.2px;width:300.8px;height:87.3px;background:#561616;border-radius:5px;box-sizing:border-box;"></div>
<div class="t" style="left:468.41px;top:1665.21px;width:600px;font-size:25.5px;line-height:30px;color:#e8e8e8;text-align:center;letter-spacing:0.01px;">00h 00m 00s 00</div>
<div class="a" style="left:924.7px;top:1356.2px;width:302.5px;height:180.3px;background:#555562;border-radius:6px;box-sizing:border-box;border:1.2px solid #4f4f5c;"></div>
<div class="t" style="left:776.17px;top:1415.71px;width:600px;font-size:25.5px;line-height:30px;color:#e8e8e8;text-align:center;letter-spacing:0.44px;">Title</div>
<div class="a" style="left:1232.4px;top:1356.2px;width:164.6px;height:180.3px;background:#561616;border-radius:5px;box-sizing:border-box;"></div>
<div class="t" style="left:1014.24px;top:1415.71px;width:600px;font-size:25.5px;line-height:30px;color:#e8e8e8;text-align:center;letter-spacing:-0.93px;">Rec</div>
<div class="t" style="left:1013.53px;top:1445.71px;width:600px;font-size:25.5px;line-height:30px;color:#e8e8e8;text-align:center;letter-spacing:-2.35px;">REC</div>
<div class="a" style="left:1403px;top:1356.2px;width:165.2px;height:180.3px;background:#2a2a2a;border-radius:5px;box-sizing:border-box;border:2px solid #00d914;"></div>
<div class="t" style="left:1185.58px;top:1415.71px;width:600px;font-size:25.5px;line-height:30px;color:#fff;text-align:center;letter-spacing:-0.04px;">Stop</div>
<div class="t" style="left:1185.58px;top:1445.71px;width:600px;font-size:25.5px;line-height:30px;color:#fff;text-align:center;letter-spacing:-0.04px;">Stop</div>
<div class="a" style="left:1574.2px;top:1356.2px;width:164.8px;height:180.3px;background:#555562;border-radius:5px;box-sizing:border-box;border:1.2px solid #4f4f5c;"></div>
<div class="t" style="left:1356.43px;top:1415.71px;width:600px;font-size:25.5px;line-height:30px;color:#e8e8e8;text-align:center;letter-spacing:-0.35px;">Play</div>
<div class="t" style="left:1356.43px;top:1445.71px;width:600px;font-size:25.5px;line-height:30px;color:#e8e8e8;text-align:center;letter-spacing:-0.35px;">Play</div>
<div class="a" style="left:924.7px;top:1543px;width:302.5px;height:180.5px;background:#555562;border-radius:6px;box-sizing:border-box;border:1.2px solid #4f4f5c;"></div>
<div class="t" style="left:776.17px;top:1602.61px;width:600px;font-size:25.5px;line-height:30px;color:#e8e8e8;text-align:center;letter-spacing:0.44px;">Title</div>
<div class="a" style="left:1232.4px;top:1543px;width:164.6px;height:180.5px;background:#561616;border-radius:5px;box-sizing:border-box;"></div>
<div class="t" style="left:1014.24px;top:1602.61px;width:600px;font-size:25.5px;line-height:30px;color:#e8e8e8;text-align:center;letter-spacing:-0.93px;">Rec</div>
<div class="a" style="left:1403px;top:1543px;width:165.2px;height:180.5px;background:#2a2a2a;border-radius:5px;box-sizing:border-box;border:2px solid #00d914;"></div>
<div class="t" style="left:1185.58px;top:1602.61px;width:600px;font-size:25.5px;line-height:30px;color:#fff;text-align:center;letter-spacing:-0.04px;">Stop</div>
<div class="a" style="left:1574.2px;top:1543px;width:164.8px;height:180.5px;background:#555562;border-radius:5px;box-sizing:border-box;border:1.2px solid #4f4f5c;"></div>
<div class="t" style="left:1356.43px;top:1602.61px;width:600px;font-size:25.5px;line-height:30px;color:#e8e8e8;text-align:center;letter-spacing:-0.35px;">Play</div>
<div class="a" style="left:1335px;top:1776px;width:232.8px;height:135px;background:#561616;border-radius:5px;box-sizing:border-box;"></div>
<div class="t" style="left:1151.31px;top:1813.86px;width:600px;font-size:25.5px;line-height:30px;color:#e8e8e8;text-align:center;letter-spacing:-0.18px;">1 Load Snippet 1</div>
<div class="t" style="left:1151.27px;top:1843.86px;width:600px;font-size:25.5px;line-height:30px;color:#e8e8e8;text-align:center;letter-spacing:-0.25px;">Sample-01</div>
<div class="a" style="left:1574.1px;top:1776px;width:232.8px;height:135px;background:#561616;border-radius:5px;box-sizing:border-box;"></div>
<div class="t" style="left:1390.41px;top:1813.86px;width:600px;font-size:25.5px;line-height:30px;color:#e8e8e8;text-align:center;letter-spacing:-0.18px;">2 Load Snippet 2</div>
<div class="t" style="left:1390.37px;top:1843.86px;width:600px;font-size:25.5px;line-height:30px;color:#e8e8e8;text-align:center;letter-spacing:-0.25px;">Sample-02</div>
<div class="a" style="left:1813.2px;top:1776px;width:232.8px;height:135px;background:#561616;border-radius:5px;box-sizing:border-box;"></div>
<div class="t" style="left:1629.51px;top:1813.86px;width:600px;font-size:25.5px;line-height:30px;color:#e8e8e8;text-align:center;letter-spacing:-0.18px;">3 Load Snippet 3</div>
<div class="t" style="left:1629.47px;top:1843.86px;width:600px;font-size:25.5px;line-height:30px;color:#e8e8e8;text-align:center;letter-spacing:-0.25px;">Sample-03</div>
<div class="a" style="left:2052.3px;top:1776px;width:232.8px;height:135px;background:#561616;border-radius:5px;box-sizing:border-box;"></div>
<div class="t" style="left:1868.61px;top:1813.86px;width:600px;font-size:25.5px;line-height:30px;color:#e8e8e8;text-align:center;letter-spacing:-0.18px;">4 Load Snippet 4</div>
<div class="t" style="left:1868.57px;top:1843.86px;width:600px;font-size:25.5px;line-height:30px;color:#e8e8e8;text-align:center;letter-spacing:-0.25px;">Sample-04</div>
<div class="t" style="left:1645.67px;top:1354.96px;width:600px;font-size:25.5px;line-height:30px;color:#fff;text-align:center;letter-spacing:-0.26px;">Lo Cut</div>
<svg class="a" style="left:1893px;top:1392.8px" width="107" height="107" viewBox="0 0 107 107"><path d="M22.67 84.33 A43.60 43.60 0 1 1 84.33 84.33" fill="none" stroke="#1b5560" stroke-width="13.80"/><line x1="54.56" y1="52.44" x2="27.20" y2="79.80" stroke="#3fe0f8" stroke-width="6"/><line x1="27.55" y1="79.45" x2="17.79" y2="89.21" stroke="#3fe0f8" stroke-width="2"/></svg>
<div class="t" style="left:1645.72px;top:1502.76px;width:600px;font-size:25.5px;line-height:30px;color:#fff;text-align:center;letter-spacing:-0.17px;">20 Hz</div>
<div class="t" style="left:1867.99px;top:1358.16px;width:600px;font-size:25.5px;line-height:30px;color:#fff;text-align:center;letter-spacing:-0.02px;">HeadAmp</div>
<svg class="a" style="left:2101.5px;top:1402.7px" width="134" height="134" viewBox="0 0 134 134"><path d="M26.84 107.16 A56.80 56.80 0 1 1 107.16 107.16" fill="none" stroke="#1b5560" stroke-width="13.60"/><line x1="68.06" y1="65.94" x2="31.29" y2="102.71" stroke="#3fe0f8" stroke-width="6"/><line x1="31.64" y1="102.36" x2="22.03" y2="111.97" stroke="#3fe0f8" stroke-width="2"/></svg>
<div class="t" style="left:1867.8px;top:1544.06px;width:600px;font-size:25.5px;line-height:30px;color:#fff;text-align:center;letter-spacing:-0.39px;">-12.0 dB</div>
<div class="t" style="left:1868.14px;top:1603.86px;width:600px;font-size:25.5px;line-height:30px;color:#fff;text-align:center;letter-spacing:0.28px;">Main</div>
<div class="t" style="left:1867.4px;top:1633.56px;width:600px;font-size:25.5px;line-height:30px;color:#fff;text-align:center;letter-spacing:-1.21px;">On</div>
<div class="a" style="left:2495.8px;top:94.5px;width:233px;height:133.5px;background:#1b7d70;border-radius:4px;box-sizing:border-box;border:2px solid #4f4f5f;"></div>
<div class="t" style="left:2312.37px;top:146.61px;width:600px;font-size:25.5px;line-height:30px;color:#000;text-align:center;letter-spacing:0.14px;">Home</div>
<div class="a" style="left:2495.8px;top:235px;width:233px;height:133px;background:#1b7d70;border-radius:4px;box-sizing:border-box;border:2px solid #4f4f5f;"></div>
<div class="t" style="left:2312.14px;top:286.86px;width:600px;font-size:25.5px;line-height:30px;color:#000;text-align:center;letter-spacing:-0.32px;">Chan View</div>
<div class="a" style="left:2495.8px;top:375px;width:233px;height:133px;background:#1b7d70;border-radius:4px;box-sizing:border-box;border:2px solid #4f4f5f;"></div>
<div class="t" style="left:2311.46px;top:426.86px;width:600px;font-size:25.5px;line-height:30px;color:#000;text-align:center;letter-spacing:-1.67px;">EFX</div>
<div class="a" style="left:2495.8px;top:562px;width:233px;height:133.5px;background:#555562;border-radius:4px;box-sizing:border-box;border:2px solid #50505e;"></div>
<div class="t" style="left:2312.21px;top:614.11px;width:600px;font-size:25.5px;line-height:30px;color:#e8e8e8;text-align:center;letter-spacing:-0.18px;">Feedback Detect</div>
<div class="a" style="left:2495.8px;top:702px;width:233px;height:133.5px;background:#555562;border-radius:4px;box-sizing:border-box;border:2px solid #50505e;"></div>
<div class="t" style="left:2312.32px;top:754.11px;width:600px;font-size:25.5px;line-height:30px;color:#e8e8e8;text-align:center;letter-spacing:0.03px;">HeadAmps</div>
<div class="a" style="left:2495.8px;top:842px;width:233px;height:87.5px;background:#7c7c7c;border-radius:4px;box-sizing:border-box;border:2px solid #4f4f5f;"></div>
<div class="t" style="left:2312.17px;top:856.11px;width:600px;font-size:25.5px;line-height:30px;color:#000;text-align:center;letter-spacing:-0.26px;">Setup</div>
<div class="t" style="left:2311.98px;top:886.11px;width:600px;font-size:25.5px;line-height:30px;color:#000;text-align:center;letter-spacing:-0.64px;">**CAREFUL**</div>
<div class="a" style="left:2495.8px;top:982.5px;width:233px;height:226.5px;background:#122959;border-radius:4px;box-sizing:border-box;border:2px solid #4f4f5f;"></div>
<div class="t" style="left:2312.1px;top:1081.11px;width:600px;font-size:25.5px;line-height:30px;color:#fff;text-align:center;letter-spacing:-0.40px;">Kill SoF</div>
<div class="a" style="left:2495.8px;top:1215.8px;width:233px;height:227.2px;background:#704808;border-radius:4px;box-sizing:border-box;"></div>
<div class="t" style="left:2312.12px;top:1314.76px;width:600px;font-size:25.5px;line-height:30px;color:#e8e8e8;text-align:center;letter-spacing:-0.35px;">Clear Solo</div>
<div class="a" style="left:2325px;top:1449.3px;width:165px;height:133.7px;background:#1b5410;border-radius:4px;box-sizing:border-box;border:2px solid #4f4f5f;"></div>
<div class="t" style="left:2107.57px;top:1486.51px;width:600px;font-size:25.5px;line-height:30px;color:#e8e8e8;text-align:center;letter-spacing:0.14px;">1</div>
<div class="t" style="left:2107.78px;top:1516.51px;width:600px;font-size:25.5px;line-height:30px;color:#e8e8e8;text-align:center;letter-spacing:0.56px;">Off</div>
<div class="a" style="left:2495.8px;top:1449.3px;width:233px;height:133.7px;background:#1b5410;border-radius:4px;box-sizing:border-box;border:2px solid #4f4f5f;"></div>
<div class="t" style="left:2312.37px;top:1486.51px;width:600px;font-size:25.5px;line-height:30px;color:#e8e8e8;text-align:center;letter-spacing:0.14px;">2</div>
<div class="t" style="left:2312.58px;top:1516.51px;width:600px;font-size:25.5px;line-height:30px;color:#e8e8e8;text-align:center;letter-spacing:0.56px;">Off</div>
<div class="a" style="left:2325px;top:1590px;width:198.8px;height:133.5px;background:#1b5410;border-radius:4px;box-sizing:border-box;border:2px solid #4f4f5f;"></div>
<div class="t" style="left:2124.47px;top:1627.11px;width:600px;font-size:25.5px;line-height:30px;color:#e8e8e8;text-align:center;letter-spacing:0.14px;">3</div>
<div class="t" style="left:2124.68px;top:1657.11px;width:600px;font-size:25.5px;line-height:30px;color:#e8e8e8;text-align:center;letter-spacing:0.56px;">Off</div>
<div class="a" style="left:2530px;top:1590px;width:198.8px;height:133.5px;background:#1b5410;border-radius:4px;box-sizing:border-box;border:2px solid #4f4f5f;"></div>
<div class="t" style="left:2329.47px;top:1627.11px;width:600px;font-size:25.5px;line-height:30px;color:#e8e8e8;text-align:center;letter-spacing:0.14px;">4</div>
<div class="t" style="left:2329.68px;top:1657.11px;width:600px;font-size:25.5px;line-height:30px;color:#e8e8e8;text-align:center;letter-spacing:0.56px;">Off</div>
<div class="a" style="left:2325px;top:1730px;width:198.8px;height:133.5px;background:#1b5410;border-radius:4px;box-sizing:border-box;border:2px solid #4f4f5f;"></div>
<div class="t" style="left:2124.47px;top:1767.11px;width:600px;font-size:25.5px;line-height:30px;color:#e8e8e8;text-align:center;letter-spacing:0.14px;">5</div>
<div class="t" style="left:2124.68px;top:1797.11px;width:600px;font-size:25.5px;line-height:30px;color:#e8e8e8;text-align:center;letter-spacing:0.56px;">Off</div>
<div class="a" style="left:2530px;top:1730px;width:198.8px;height:133.5px;background:#1b5410;border-radius:4px;box-sizing:border-box;border:2px solid #4f4f5f;"></div>
<div class="t" style="left:2329.47px;top:1767.11px;width:600px;font-size:25.5px;line-height:30px;color:#e8e8e8;text-align:center;letter-spacing:0.14px;">6</div>
<div class="t" style="left:2329.68px;top:1797.11px;width:600px;font-size:25.5px;line-height:30px;color:#e8e8e8;text-align:center;letter-spacing:0.56px;">Off</div>
</div>
</body></html>
